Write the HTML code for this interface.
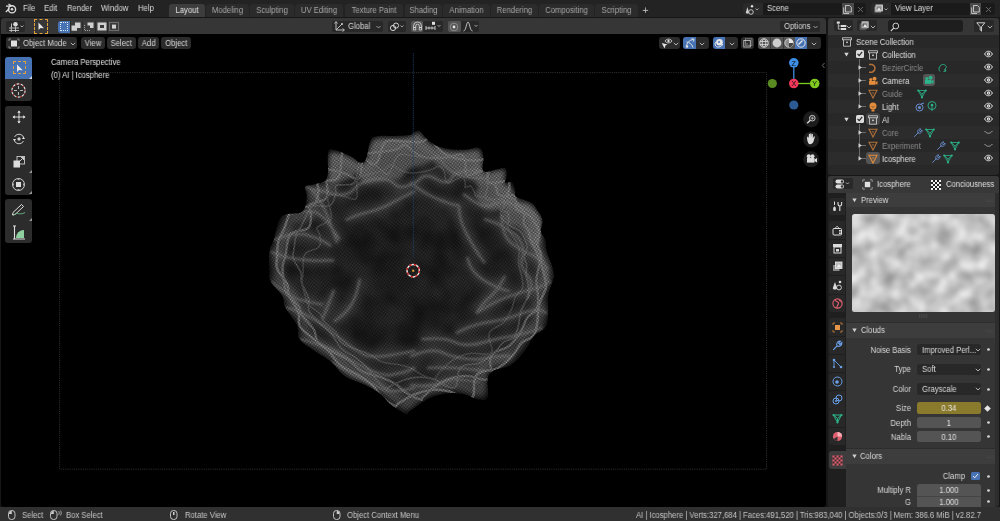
<!DOCTYPE html>
<html><head><meta charset="utf-8">
<style>
*{margin:0;padding:0;box-sizing:border-box}
html,body{width:1000px;height:521px;overflow:hidden;background:#161616;font-family:"Liberation Sans",sans-serif;}
.a{position:absolute}
.t{position:absolute;white-space:nowrap;font-size:8.3px;line-height:10px;color:#dcdcdc;transform:translateY(0.9px) scaleX(0.925);transform-origin:0 0;will-change:transform}
.tc{transform-origin:50% 0}
.tr{transform-origin:100% 0}
.btn{position:absolute;background:#282828;border-radius:2px}
svg{position:absolute;overflow:visible}
</style></head><body>
<!-- menu bar -->
<div class="a" style="left:0;top:0;width:1000px;height:17px;background:#232323"></div>

<!-- blender logo -->
<svg style="left:5px;top:3px" width="12" height="11" viewBox="0 0 12 11">
<circle cx="7" cy="6.3" r="3.6" fill="none" stroke="#dcdcdc" stroke-width="1.4"/>
<circle cx="7" cy="6.3" r="1.3" fill="#dcdcdc"/>
<path d="M1 3.2 L6 3.2 M0.8 9 L4.5 5.5 M3.5 1.2 L7 3" stroke="#dcdcdc" stroke-width="1.3" fill="none"/>
</svg>
<div class="t" style="left:23px;top:2.3px">File</div>
<div class="t" style="left:43.5px;top:2.3px">Edit</div>
<div class="t" style="left:66.5px;top:2.3px">Render</div>
<div class="t" style="left:101px;top:2.3px">Window</div>
<div class="t" style="left:138px;top:2.3px">Help</div>
<div class="a" style="left:169px;top:4px;width:36px;height:13px;background:#3d3d3d;border-radius:3px 3px 0 0"></div><div class="t tc" style="left:169px;top:3.8px;width:36px;text-align:center;color:#e8e8e8">Layout</div>
<div class="a" style="left:206px;top:4px;width:43px;height:13px;background:#2b2b2b;border-radius:3px 3px 0 0"></div><div class="t tc" style="left:206px;top:3.8px;width:43px;text-align:center;color:#a8a8a8">Modeling</div>
<div class="a" style="left:250px;top:4px;width:44px;height:13px;background:#2b2b2b;border-radius:3px 3px 0 0"></div><div class="t tc" style="left:250px;top:3.8px;width:44px;text-align:center;color:#a8a8a8">Sculpting</div>
<div class="a" style="left:295px;top:4px;width:48px;height:13px;background:#2b2b2b;border-radius:3px 3px 0 0"></div><div class="t tc" style="left:295px;top:3.8px;width:48px;text-align:center;color:#a8a8a8">UV Editing</div>
<div class="a" style="left:345px;top:4px;width:58px;height:13px;background:#2b2b2b;border-radius:3px 3px 0 0"></div><div class="t tc" style="left:345px;top:3.8px;width:58px;text-align:center;color:#a8a8a8">Texture Paint</div>
<div class="a" style="left:405px;top:4px;width:37px;height:13px;background:#2b2b2b;border-radius:3px 3px 0 0"></div><div class="t tc" style="left:405px;top:3.8px;width:37px;text-align:center;color:#a8a8a8">Shading</div>
<div class="a" style="left:443px;top:4px;width:47px;height:13px;background:#2b2b2b;border-radius:3px 3px 0 0"></div><div class="t tc" style="left:443px;top:3.8px;width:47px;text-align:center;color:#a8a8a8">Animation</div>
<div class="a" style="left:491px;top:4px;width:47px;height:13px;background:#2b2b2b;border-radius:3px 3px 0 0"></div><div class="t tc" style="left:491px;top:3.8px;width:47px;text-align:center;color:#a8a8a8">Rendering</div>
<div class="a" style="left:539px;top:4px;width:55px;height:13px;background:#2b2b2b;border-radius:3px 3px 0 0"></div><div class="t tc" style="left:539px;top:3.8px;width:55px;text-align:center;color:#a8a8a8">Compositing</div>
<div class="a" style="left:595px;top:4px;width:43px;height:13px;background:#2b2b2b;border-radius:3px 3px 0 0"></div><div class="t tc" style="left:595px;top:3.8px;width:43px;text-align:center;color:#a8a8a8">Scripting</div>
<div class="t tc" style="left:640px;top:4px;width:11px;text-align:center;font-size:11px;color:#bbb">+</div>
<!-- tool header -->
<div class="a" style="left:1px;top:18px;width:825px;height:16.5px;background:#363636;border-radius:3px 3px 0 0"></div>
<!-- viewport -->
<div class="a" style="left:1px;top:34px;width:825px;height:473px;background:#000;border-radius:0 0 3px 3px"></div>

<!-- TOOL HEADER CONTENT -->
<div class="btn" style="left:6px;top:21px;width:19px;height:11px;background:#282828"></div>
<svg style="left:8px;top:21px" width="16" height="11" viewBox="0 0 16 11">
<circle cx="7.5" cy="3.3" r="2.3" fill="#d8d8d8"/>
<path d="M1 7 H11 M1.2 9.5 H11 M3.3 5.5 V11 M7.5 5.5 V11 M3.5 2.5 V6" stroke="#c8c8c8" stroke-width="0.9" fill="none"/>
<path d="M12.5 4.5 L14 6 L15.5 4.5" stroke="#c8c8c8" stroke-width="0.8" fill="none"/>
</svg>
<div class="a" style="left:33.5px;top:19px;width:14.5px;height:14.5px;border:1.3px dashed #e5a23a;border-radius:1px"></div>
<svg style="left:37px;top:22px" width="8" height="9" viewBox="0 0 8 9"><path d="M1.5 0.5 L1.5 8 L3.5 6 L7 6.2 Z" fill="#e8e8e8"/></svg>
<div class="btn" style="left:57.6px;top:20.5px;width:62px;height:12px;background:#3a3a3a;border-radius:3px"></div>
<div class="a" style="left:57.6px;top:20.5px;width:12px;height:12px;background:#4772b3;border-radius:3px 0 0 3px"></div>
<div class="a" style="left:69.6px;top:20.5px;width:0.6px;height:12px;background:#2a2a2a"></div>
<div class="a" style="left:82.3px;top:20.5px;width:0.6px;height:12px;background:#2a2a2a"></div>
<div class="a" style="left:94.7px;top:20.5px;width:0.6px;height:12px;background:#2a2a2a"></div>
<div class="a" style="left:107px;top:20.5px;width:0.6px;height:12px;background:#2a2a2a"></div>
<div class="a" style="left:59.5px;top:22.3px;width:8.5px;height:8.5px;border:1px dotted #dfe8f5"></div>
<svg style="left:71px;top:22px" width="10" height="9" viewBox="0 0 10 9"><path d="M0.5 3.5 H4 V0.5 H9.5 V6 H6 V8.8 H0.5 Z" fill="#d0d0d0"/></svg>
<svg style="left:84px;top:22px" width="10" height="9" viewBox="0 0 10 9"><path d="M3.5 0.5 H9.5 V6 H6 V3.5 H3.5 Z" fill="#d0d0d0"/><path d="M0.5 3 V8.5 H6" stroke="#bbb" stroke-width="0.8" stroke-dasharray="1 1" fill="none"/></svg>
<svg style="left:96.5px;top:22px" width="10" height="9" viewBox="0 0 10 9"><path d="M0.5 0.5 H9.5 V8.5 H0.5 Z M3 3 V6 H7 V3 Z" fill="#d0d0d0" fill-rule="evenodd"/></svg>
<svg style="left:108.5px;top:22px" width="10" height="9" viewBox="0 0 10 9"><rect x="0.5" y="0.5" width="9" height="8" fill="none" stroke="#bbb" stroke-width="0.8" stroke-dasharray="1 1"/><rect x="3" y="2.6" width="4" height="4" fill="#d0d0d0"/></svg>

<!-- transform orientation -->
<div class="btn" style="left:331.5px;top:20.5px;width:51px;height:11.5px;background:#282828"></div>
<svg style="left:334px;top:21px" width="12" height="11" viewBox="0 0 12 11"><path d="M2 1 V9 H10 M2 9 L8 3" stroke="#cfcfcf" stroke-width="0.9" fill="none"/><path d="M0.5 2.5 L2 0.5 L3.5 2.5 M8.5 7.5 L10.5 9 L8.5 10.5" stroke="#cfcfcf" stroke-width="0.8" fill="none"/><circle cx="8" cy="3" r="1" fill="#cfcfcf"/></svg>
<div class="t" style="left:347.5px;top:20.2px">Global</div>
<svg style="left:376px;top:24.5px" width="5" height="4" viewBox="0 0 5 4"><path d="M0.5 1 L2.5 3 L4.5 1" stroke="#bbb" stroke-width="0.8" fill="none"/></svg>
<div class="btn" style="left:387.5px;top:20.5px;width:18px;height:11.5px;background:#282828"></div>
<svg style="left:389px;top:21.5px" width="16" height="10" viewBox="0 0 16 10"><circle cx="4" cy="6" r="2.6" fill="none" stroke="#d0d0d0" stroke-width="1"/><circle cx="7" cy="3.6" r="2.6" fill="none" stroke="#d0d0d0" stroke-width="1"/><path d="M11.5 3.5 L13 5 L14.5 3.5" stroke="#bbb" stroke-width="0.8" fill="none"/></svg>
<div class="btn" style="left:410.5px;top:20.5px;width:12.5px;height:11.5px;background:#555"></div>
<svg style="left:411.5px;top:21.3px" width="11" height="10" viewBox="0 0 11 10"><path d="M1.5 6.5 V5 A4 4 0 0 1 9.5 5 V6.5 H7.3 V5 A1.8 1.8 0 0 0 3.7 5 V6.5 Z" fill="none" stroke="#d8d8d8" stroke-width="0.8"/><path d="M1.5 6.5 H3.7 V9 H1.5 Z M7.3 6.5 H9.5 V9 H7.3 Z" fill="none" stroke="#d8d8d8" stroke-width="0.8"/></svg>
<div class="btn" style="left:423px;top:20.5px;width:20px;height:11.5px;background:#282828"></div>
<svg style="left:424.5px;top:21px" width="18" height="11" viewBox="0 0 18 11"><rect x="7" y="0.8" width="3" height="3" fill="#e0e0e0"/><path d="M1 7 H10 M1 5 V9 M4 5.5 V8.5 M7 5.5 V8.5 M10 5 V9" stroke="#cfcfcf" stroke-width="0.9" fill="none"/><path d="M12.5 4 L14 5.5 L15.5 4" stroke="#bbb" stroke-width="0.8" fill="none"/></svg>
<div class="btn" style="left:447.5px;top:20.5px;width:13px;height:11.5px;background:#555"></div>
<svg style="left:449px;top:21.5px" width="10" height="10" viewBox="0 0 10 10"><circle cx="5" cy="5" r="3.8" fill="none" stroke="#999" stroke-width="0.8"/><circle cx="5" cy="5" r="1.4" fill="#e8e8e8"/></svg>
<div class="btn" style="left:461px;top:20.5px;width:18px;height:11.5px;background:#282828"></div>
<svg style="left:462.5px;top:21px" width="16" height="11" viewBox="0 0 16 11"><path d="M0.5 10 C3 10 3.5 1 5 1 C6.5 1 7 10 9.5 10" stroke="#cfcfcf" stroke-width="0.9" fill="none"/><path d="M11.5 4 L13 5.5 L14.5 4" stroke="#bbb" stroke-width="0.8" fill="none"/></svg>

<!-- options -->
<div class="btn" style="left:779.5px;top:20.5px;width:40.5px;height:11.5px;background:#282828"></div>
<div class="t" style="left:783.5px;top:20.2px">Options</div>
<svg style="left:813px;top:24.5px" width="5" height="4" viewBox="0 0 5 4"><path d="M0.5 1 L2.5 3 L4.5 1" stroke="#bbb" stroke-width="0.8" fill="none"/></svg>

<!-- scene selector -->
<div class="btn" style="left:742.5px;top:3px;width:123.5px;height:12px;background:#1a1a1a;border-radius:3px"></div>
<div class="a" style="left:742.5px;top:3px;width:20px;height:12px;background:#2a2a2a;border-radius:3px 0 0 3px"></div>
<svg style="left:745px;top:3.5px" width="16" height="11" viewBox="0 0 16 11"><path d="M2.5 3 L0.8 8.5 C0.8 10 4 10 4 8.5 Z" fill="#cfcfcf"/><circle cx="6" cy="8" r="2.3" fill="none" stroke="#cfcfcf" stroke-width="0.9"/><circle cx="7" cy="2.2" r="1.2" fill="#e0e0e0"/><path d="M10.5 4.5 L12 6 L13.5 4.5" stroke="#bbb" stroke-width="0.8" fill="none"/></svg>
<div class="t" style="left:767px;top:2.2px;color:#e0e0e0">Scene</div>
<div class="a" style="left:841.5px;top:3px;width:12px;height:12px;background:#4a4a4a"></div>
<svg style="left:843px;top:4.5px" width="9" height="9" viewBox="0 0 9 9"><path d="M2.5 0.5 H6.5 L8.3 2.3 V7 H2.5 Z" fill="none" stroke="#ddd" stroke-width="0.8"/><path d="M0.7 2.5 V8.5 H6" fill="none" stroke="#ddd" stroke-width="0.8"/></svg>
<svg style="left:856.5px;top:5.5px" width="7" height="7" viewBox="0 0 7 7"><path d="M1 1 L6 6 M6 1 L1 6" stroke="#777" stroke-width="0.8"/></svg>

<div class="btn" style="left:871px;top:3px;width:124px;height:12px;background:#1a1a1a;border-radius:3px"></div>
<div class="a" style="left:871px;top:3px;width:20px;height:12px;background:#2a2a2a;border-radius:3px 0 0 3px"></div>
<svg style="left:872.5px;top:3.5px" width="16" height="11" viewBox="0 0 16 11"><rect x="3" y="1" width="6.5" height="6" fill="#aaa"/><rect x="1.5" y="2.5" width="6.5" height="6" fill="#888"/><rect x="3" y="1" width="6.5" height="6" fill="none" stroke="#ddd" stroke-width="0.8"/><path d="M4 6.5 L6 3.5 L8 6.5 Z" fill="#eee"/><path d="M11.5 4.5 L13 6 L14.5 4.5" stroke="#bbb" stroke-width="0.8" fill="none"/></svg>
<div class="t" style="left:895px;top:2.2px;color:#e0e0e0">View Layer</div>
<div class="a" style="left:969.5px;top:3px;width:11.5px;height:12px;background:#4a4a4a"></div>
<svg style="left:971px;top:4.5px" width="9" height="9" viewBox="0 0 9 9"><path d="M2.5 0.5 H6.5 L8.3 2.3 V7 H2.5 Z" fill="none" stroke="#ddd" stroke-width="0.8"/><path d="M0.7 2.5 V8.5 H6" fill="none" stroke="#ddd" stroke-width="0.8"/></svg>
<svg style="left:985px;top:5.5px" width="7" height="7" viewBox="0 0 7 7"><path d="M1 1 L6 6 M6 1 L1 6" stroke="#777" stroke-width="0.8"/></svg>


<!-- VIEWPORT HEADER -->
<div class="btn" style="left:5.8px;top:36.8px;width:71px;height:12.7px;background:#2b2b2b;border-radius:3px"></div>
<svg style="left:8px;top:37.5px" width="12" height="11" viewBox="0 0 12 11"><rect x="3" y="2.5" width="6" height="6" fill="#e0e0e0"/><path d="M1 3 V1 H3 M9 1 H11 V3 M11 8 V10 H9 M3 10 H1 V8" stroke="#999" stroke-width="0.8" fill="none"/></svg>
<div class="t" style="left:22.5px;top:37.4px">Object Mode</div>
<svg style="left:69.5px;top:41.5px" width="6" height="4" viewBox="0 0 6 4"><path d="M0.8 0.8 L3 3 L5.2 0.8" stroke="#c0c0c0" stroke-width="0.9" fill="none"/></svg>
<div class="btn" style="left:81px;top:36.8px;width:24px;height:12.7px;background:#2b2b2b;border-radius:3px"></div>
<div class="t tc" style="left:81px;width:24px;text-align:center;top:37.4px">View</div>
<div class="btn" style="left:107.3px;top:36.8px;width:28.5px;height:12.7px;background:#2b2b2b;border-radius:3px"></div>
<div class="t tc" style="left:107.3px;width:28.5px;text-align:center;top:37.4px">Select</div>
<div class="btn" style="left:137.5px;top:36.8px;width:21.3px;height:12.7px;background:#2b2b2b;border-radius:3px"></div>
<div class="t tc" style="left:137.5px;width:21.3px;text-align:center;top:37.4px">Add</div>
<div class="btn" style="left:160.8px;top:36.8px;width:30.5px;height:12.7px;background:#2b2b2b;border-radius:3px"></div>
<div class="t tc" style="left:160.8px;width:30.5px;text-align:center;top:37.4px">Object</div>

<div class="btn" style="left:659px;top:36.8px;width:20.7px;height:12.2px;background:#2b2b2b;border-radius:3px"></div>
<svg style="left:661px;top:37.5px" width="12" height="11" viewBox="0 0 12 11"><path d="M4 3 C5.5 0.5 9.5 0.5 11 3 C9.5 5.5 5.5 5.5 4 3 Z" fill="none" stroke="#ddd" stroke-width="0.9"/><circle cx="7.5" cy="3" r="1.2" fill="#ddd"/><path d="M0.8 5 L6.5 6.5 L4.5 7.5 L3.5 10.5 Z" fill="#e5e5e5"/></svg>
<svg style="left:672.5px;top:41.5px" width="6" height="4" viewBox="0 0 6 4"><path d="M0.8 0.8 L3 3 L5.2 0.8" stroke="#c0c0c0" stroke-width="0.9" fill="none"/></svg>
<div class="btn" style="left:683px;top:36.8px;width:25.5px;height:12.2px;background:#2b2b2b;border-radius:3px"></div>
<div class="a" style="left:683px;top:36.8px;width:12.5px;height:12.2px;background:#4772b3;border-radius:3px 0 0 3px"></div>
<svg style="left:684.5px;top:38px" width="10" height="10" viewBox="0 0 10 10"><path d="M1.5 9 C1.5 5 4 2 8.5 1.5" stroke="#e8e8e8" stroke-width="0.9" fill="none"/><path d="M1.5 4 C4 4 7 6 8 9.5" stroke="#e8e8e8" stroke-width="0.9" fill="none"/><path d="M6.5 0.8 L9 1.2 L8.5 3.6" stroke="#e8e8e8" stroke-width="0.9" fill="none"/><circle cx="2" cy="8.5" r="1.2" fill="#e8e8e8"/></svg>
<svg style="left:699px;top:41.5px" width="6" height="4" viewBox="0 0 6 4"><path d="M0.8 0.8 L3 3 L5.2 0.8" stroke="#c0c0c0" stroke-width="0.9" fill="none"/></svg>
<div class="btn" style="left:712.5px;top:36.8px;width:25.2px;height:12.2px;background:#2b2b2b;border-radius:3px"></div>
<div class="a" style="left:712.5px;top:36.8px;width:12.2px;height:12.2px;background:#4772b3;border-radius:3px 0 0 3px"></div>
<svg style="left:713.5px;top:37.8px" width="10" height="10" viewBox="0 0 10 10"><circle cx="5.5" cy="4.2" r="3.3" fill="#e8e8e8"/><path d="M2.5 3.5 C0 5 1 9.5 4.5 9 C7 8.8 8.5 7.5 8.5 6" stroke="#e8e8e8" stroke-width="1" fill="none"/><circle cx="5" cy="4" r="1" fill="#4772b3"/></svg>
<svg style="left:728.5px;top:41.5px" width="6" height="4" viewBox="0 0 6 4"><path d="M0.8 0.8 L3 3 L5.2 0.8" stroke="#c0c0c0" stroke-width="0.9" fill="none"/></svg>
<div class="btn" style="left:741.3px;top:36.8px;width:12.6px;height:12.2px;background:#2b2b2b;border-radius:3px"></div>
<svg style="left:743px;top:38px" width="10" height="10" viewBox="0 0 10 10"><rect x="2.5" y="0.8" width="6.5" height="6.5" fill="none" stroke="#888" stroke-width="0.8"/><rect x="0.8" y="2.5" width="6.5" height="6.5" fill="none" stroke="#ccc" stroke-width="0.8"/><circle cx="4" cy="5.8" r="0.6" fill="#ccc"/></svg>
<div class="btn" style="left:757.6px;top:36.8px;width:63px;height:12.2px;background:#2b2b2b;border-radius:3px"></div>
<div class="a" style="left:757.6px;top:36.8px;width:37.3px;height:12.2px;background:#545454;border-radius:3px 0 0 3px"></div>
<div class="a" style="left:770.2px;top:36.8px;width:0.6px;height:12.2px;background:#3a3a3a"></div>
<div class="a" style="left:782.8px;top:36.8px;width:0.6px;height:12.2px;background:#3a3a3a"></div>
<div class="a" style="left:794.9px;top:36.8px;width:12.6px;height:12.2px;background:#4772b3"></div>
<svg style="left:758.9px;top:37.9px" width="10" height="10" viewBox="0 0 10 10"><circle cx="5" cy="5" r="4.2" fill="none" stroke="#ddd" stroke-width="0.9"/><ellipse cx="5" cy="5" rx="1.8" ry="4.2" fill="none" stroke="#ddd" stroke-width="0.8"/><path d="M0.8 3.5 H9.2 M0.8 6.5 H9.2" stroke="#ddd" stroke-width="0.8"/></svg>
<svg style="left:771.5px;top:37.9px" width="10" height="10" viewBox="0 0 10 10"><circle cx="5" cy="5" r="4.4" fill="#cfcfcf"/></svg>
<svg style="left:783.9px;top:37.9px" width="10" height="10" viewBox="0 0 10 10"><circle cx="5" cy="5" r="4.2" fill="#8a8a8a" stroke="#ddd" stroke-width="0.8"/><path d="M5 5 V0.8 A4.2 4.2 0 0 1 9.2 5 Z" fill="#e8e8e8"/><path d="M5 5 H9.2 A4.2 4.2 0 0 1 5 9.2 Z" fill="#444"/></svg>
<svg style="left:796.2px;top:37.9px" width="10" height="10" viewBox="0 0 10 10"><circle cx="5" cy="5" r="4.2" fill="none" stroke="#eee" stroke-width="0.9"/><path d="M2.5 6.5 L6.5 2.5" stroke="#eee" stroke-width="1.2"/></svg>
<svg style="left:811px;top:41.5px" width="6" height="4" viewBox="0 0 6 4"><path d="M0.8 0.8 L3 3 L5.2 0.8" stroke="#c0c0c0" stroke-width="0.9" fill="none"/></svg>



<!-- VIEWPORT OVERLAYS -->
<!--MESH-->
<svg style="left:0;top:0" width="1000" height="521" viewBox="0 0 1000 521">
<rect x="59.6" y="72.6" width="707" height="396.6" fill="none" stroke="#3c3c3c" stroke-width="0.8" stroke-dasharray="1.1 1.1"/>
<defs>
<pattern id="mesh" width="1.9" height="1.9" patternUnits="userSpaceOnUse" patternTransform="rotate(25)">
<path d="M0 0 H1.9 M0 0 V1.9 M0 0 L1.9 1.9" stroke="#e8e8e8" stroke-width="0.55" fill="none"/>
</pattern>
<filter id="bl4" x="-20%" y="-20%" width="140%" height="140%"><feGaussianBlur stdDeviation="4"/></filter>
<filter id="bl15" x="-20%" y="-20%" width="140%" height="140%"><feGaussianBlur stdDeviation="1.1"/></filter>
<filter id="bl1" x="-20%" y="-20%" width="140%" height="140%"><feGaussianBlur stdDeviation="0.7"/></filter>
<filter id="turb" x="0" y="0" width="100%" height="100%" color-interpolation-filters="sRGB"><feTurbulence type="fractalNoise" baseFrequency="0.04" numOctaves="2" seed="3"/><feColorMatrix type="matrix" values="0 0 0 0 0  0 0 0 0 0  0 0 0 0 0  2 0 0 0 -0.6"/></filter>
<filter id="bl2" x="-20%" y="-20%" width="140%" height="140%"><feGaussianBlur stdDeviation="2"/></filter>
<clipPath id="blobclip"><path d="M269.3 251.7 C270.2 245.7 271.6 246.5 273.6 240.2 C275.6 233.9 276.8 225.2 279.4 220.0 C282.0 214.8 282.0 216.0 286.6 214.3 C291.2 212.6 298.4 214.9 302.4 211.4 C306.4 207.9 306.2 201.9 306.8 197.0 C307.4 192.1 303.6 189.5 305.3 186.9 C307.0 184.3 311.1 185.7 315.4 184.0 C319.7 182.3 324.3 184.6 326.9 178.3 C329.5 172.0 326.6 158.0 328.3 152.4 C330.0 146.8 330.9 149.4 335.5 150.3 C340.1 151.2 346.5 154.3 351.4 156.7 C356.3 159.1 357.1 161.8 360.0 162.4 C362.9 163.0 363.8 163.6 365.8 159.6 C367.8 155.6 368.1 146.9 370.1 142.3 C372.1 137.7 371.3 137.8 375.9 136.5 C380.5 135.2 386.5 136.2 393.1 135.9 C399.7 135.6 403.9 136.0 409.0 135.0 C414.1 134.0 414.9 129.9 418.6 130.8 C422.3 131.7 423.3 136.2 427.3 139.4 C431.3 142.6 433.6 144.6 438.8 146.6 C444.0 148.6 447.4 148.9 453.2 149.5 C459.0 150.1 462.4 149.8 467.6 149.5 C472.8 149.2 475.9 146.6 479.1 148.0 C482.3 149.4 482.5 152.1 483.4 156.7 C484.3 161.3 480.8 168.5 483.4 171.1 C486.0 173.7 492.1 170.2 496.4 169.6 C500.7 169.0 503.0 166.8 505.0 168.2 C507.0 169.6 506.5 173.9 506.5 176.8 C506.5 179.7 503.9 181.4 505.0 182.6 C506.1 183.8 510.2 180.9 512.2 182.6 C514.2 184.3 514.2 188.3 515.1 191.2 C516.0 194.1 513.3 194.7 516.5 197.0 C519.7 199.3 526.7 199.8 531.0 202.7 C535.3 205.6 535.8 207.9 538.1 211.4 C540.4 214.9 541.8 216.0 542.4 220.0 C543.0 224.0 540.4 227.5 541.0 231.5 C541.6 235.5 544.1 236.2 545.3 240.2 C546.5 244.2 545.6 247.1 546.8 251.7 C548.0 256.3 549.7 258.5 551.1 263.2 C552.5 267.9 553.7 271.3 554.0 275.0 C554.3 278.7 553.7 277.3 552.5 281.5 C551.3 285.7 549.1 289.6 548.2 295.9 C547.3 302.2 548.8 306.9 548.2 313.2 C547.6 319.5 548.2 323.0 545.3 327.6 C542.4 332.2 537.8 331.6 533.8 336.2 C529.8 340.8 529.8 344.8 525.2 350.6 C520.6 356.4 517.1 361.0 510.8 365.0 C504.5 369.0 498.1 367.9 493.5 370.8 C488.9 373.7 488.9 374.2 487.7 379.4 C486.5 384.6 489.4 392.7 487.7 396.7 C486.0 400.7 484.3 400.2 479.1 399.6 C473.9 399.0 468.7 395.0 461.8 393.8 C454.9 392.6 451.5 392.6 444.6 393.8 C437.7 395.0 434.2 396.1 427.3 399.6 C420.4 403.1 414.2 408.2 410.0 411.1 C405.8 414.0 409.8 415.2 406.1 414.0 C402.4 412.8 396.9 409.3 391.7 405.3 C386.5 401.3 385.4 397.8 380.2 393.8 C375.0 389.8 372.7 388.7 365.8 385.2 C358.9 381.7 352.5 381.1 345.6 376.5 C338.7 371.9 337.5 367.3 331.2 362.1 C324.9 356.9 320.3 355.2 314.0 350.6 C307.7 346.0 303.1 344.3 299.6 339.1 C296.1 333.9 299.6 331.0 296.7 324.7 C293.8 318.4 288.1 313.2 285.2 307.4 C282.3 301.6 285.2 301.1 282.3 295.9 C279.4 290.7 273.4 286.7 270.8 281.5 C268.2 276.3 269.6 276.0 269.3 270.0 C269.0 264.0 268.4 257.7 269.3 251.7 Z"/></clipPath>
<mask id="meshmask" maskUnits="userSpaceOnUse" x="0" y="0" width="1000" height="521">
<g clip-path="url(#blobclip)">
<rect x="0" y="0" width="1000" height="521" fill="#4e4e4e"/>
<rect x="260" y="125" width="300" height="295" fill="#000" filter="url(#turb)" opacity="0.45"/>
<g fill="#b0b0b0" filter="url(#bl2)"><path d="M370.1 142.3 C372.8 137.7 372.1 137.6 375.9 136.5 C379.7 135.4 387.6 136.2 393.1 135.9 C398.6 135.7 404.8 135.8 409.0 135.0 C413.2 134.2 415.6 130.1 418.6 130.8 C421.7 131.5 423.9 136.8 427.3 139.4 C430.7 142.0 437.9 143.2 438.8 146.6 C439.8 150.0 435.9 156.5 433.0 159.6 C430.1 162.7 425.3 163.9 421.5 165.3 C417.7 166.7 413.6 166.1 410.0 168.2 C406.4 170.3 404.0 176.1 400.0 178.0 C396.0 179.9 392.1 178.9 385.9 179.7 C379.7 180.5 367.2 185.2 362.9 182.6 C358.6 180.0 358.8 170.6 360.0 163.9 C361.2 157.2 367.5 146.9 370.1 142.3 Z"/><path d="M328.3 152.4 C332.4 148.8 346.1 154.8 351.4 156.7 C356.7 158.6 359.5 160.8 360.0 163.9 C360.5 167.0 358.1 172.3 354.3 175.4 C350.5 178.5 341.6 182.1 337.0 182.6 C332.4 183.1 328.3 183.3 326.9 178.3 C325.4 173.3 324.2 156.0 328.3 152.4 Z"/><path d="M438.8 146.6 C442.2 144.9 446.5 149.3 453.2 149.5 C459.9 149.7 474.1 146.8 479.1 148.0 C484.1 149.2 482.7 152.8 483.4 156.7 C484.1 160.5 484.6 167.3 483.4 171.1 C482.2 174.9 480.3 178.8 476.2 179.7 C472.1 180.6 464.3 178.2 459.0 176.8 C453.7 175.4 448.9 174.0 444.6 171.1 C440.3 168.2 434.0 163.7 433.0 159.6 C432.0 155.5 435.4 148.3 438.8 146.6 Z"/><path d="M483.4 171.1 C488.2 168.7 501.1 167.2 505.0 168.2 C508.9 169.1 507.4 173.5 506.5 176.8 C505.6 180.2 502.9 185.9 499.3 188.3 C495.7 190.7 488.8 192.1 484.9 191.2 C481.0 190.2 476.4 185.9 476.2 182.6 C475.9 179.2 478.6 173.5 483.4 171.1 Z"/><path d="M476.2 191.2 C478.1 186.9 489.9 182.6 496.4 182.6 C502.9 182.6 511.8 188.3 515.1 191.2 C518.5 194.1 518.2 197.0 516.5 199.9 C514.8 202.8 510.3 207.1 505.0 208.5 C499.7 209.9 489.7 211.4 484.9 208.5 C480.1 205.6 474.3 195.5 476.2 191.2 Z"/><path d="M505.0 208.5 C509.3 205.1 524.8 200.8 531.0 202.7 C537.2 204.6 540.7 213.8 542.4 220.0 C544.1 226.2 542.9 235.9 541.0 240.2 C539.1 244.5 534.6 247.9 531.0 246.0 C527.4 244.1 523.7 232.5 519.4 228.7 C515.1 224.8 507.4 226.3 505.0 222.9 C502.6 219.5 500.7 211.9 505.0 208.5 Z"/></g>
<path d="M269.3 251.7 C270.2 245.7 271.6 246.5 273.6 240.2 C275.6 233.9 276.8 225.2 279.4 220.0 C282.0 214.8 282.0 216.0 286.6 214.3 C291.2 212.6 298.4 214.9 302.4 211.4 C306.4 207.9 306.2 201.9 306.8 197.0 C307.4 192.1 303.6 189.5 305.3 186.9 C307.0 184.3 311.1 185.7 315.4 184.0 C319.7 182.3 324.3 184.6 326.9 178.3 C329.5 172.0 326.6 158.0 328.3 152.4 C330.0 146.8 330.9 149.4 335.5 150.3 C340.1 151.2 346.5 154.3 351.4 156.7 C356.3 159.1 357.1 161.8 360.0 162.4 C362.9 163.0 363.8 163.6 365.8 159.6 C367.8 155.6 368.1 146.9 370.1 142.3 C372.1 137.7 371.3 137.8 375.9 136.5 C380.5 135.2 386.5 136.2 393.1 135.9 C399.7 135.6 403.9 136.0 409.0 135.0 C414.1 134.0 414.9 129.9 418.6 130.8 C422.3 131.7 423.3 136.2 427.3 139.4 C431.3 142.6 433.6 144.6 438.8 146.6 C444.0 148.6 447.4 148.9 453.2 149.5 C459.0 150.1 462.4 149.8 467.6 149.5 C472.8 149.2 475.9 146.6 479.1 148.0 C482.3 149.4 482.5 152.1 483.4 156.7 C484.3 161.3 480.8 168.5 483.4 171.1 C486.0 173.7 492.1 170.2 496.4 169.6 C500.7 169.0 503.0 166.8 505.0 168.2 C507.0 169.6 506.5 173.9 506.5 176.8 C506.5 179.7 503.9 181.4 505.0 182.6 C506.1 183.8 510.2 180.9 512.2 182.6 C514.2 184.3 514.2 188.3 515.1 191.2 C516.0 194.1 513.3 194.7 516.5 197.0 C519.7 199.3 526.7 199.8 531.0 202.7 C535.3 205.6 535.8 207.9 538.1 211.4 C540.4 214.9 541.8 216.0 542.4 220.0 C543.0 224.0 540.4 227.5 541.0 231.5 C541.6 235.5 544.1 236.2 545.3 240.2 C546.5 244.2 545.6 247.1 546.8 251.7 C548.0 256.3 549.7 258.5 551.1 263.2 C552.5 267.9 553.7 271.3 554.0 275.0 C554.3 278.7 553.7 277.3 552.5 281.5 C551.3 285.7 549.1 289.6 548.2 295.9 C547.3 302.2 548.8 306.9 548.2 313.2 C547.6 319.5 548.2 323.0 545.3 327.6 C542.4 332.2 537.8 331.6 533.8 336.2 C529.8 340.8 529.8 344.8 525.2 350.6 C520.6 356.4 517.1 361.0 510.8 365.0 C504.5 369.0 498.1 367.9 493.5 370.8 C488.9 373.7 488.9 374.2 487.7 379.4 C486.5 384.6 489.4 392.7 487.7 396.7 C486.0 400.7 484.3 400.2 479.1 399.6 C473.9 399.0 468.7 395.0 461.8 393.8 C454.9 392.6 451.5 392.6 444.6 393.8 C437.7 395.0 434.2 396.1 427.3 399.6 C420.4 403.1 414.2 408.2 410.0 411.1 C405.8 414.0 409.8 415.2 406.1 414.0 C402.4 412.8 396.9 409.3 391.7 405.3 C386.5 401.3 385.4 397.8 380.2 393.8 C375.0 389.8 372.7 388.7 365.8 385.2 C358.9 381.7 352.5 381.1 345.6 376.5 C338.7 371.9 337.5 367.3 331.2 362.1 C324.9 356.9 320.3 355.2 314.0 350.6 C307.7 346.0 303.1 344.3 299.6 339.1 C296.1 333.9 299.6 331.0 296.7 324.7 C293.8 318.4 288.1 313.2 285.2 307.4 C282.3 301.6 285.2 301.1 282.3 295.9 C279.4 290.7 273.4 286.7 270.8 281.5 C268.2 276.3 269.6 276.0 269.3 270.0 C269.0 264.0 268.4 257.7 269.3 251.7 Z" fill="none" stroke="#000000" stroke-width="3" filter="url(#bl2)"/><path d="M269.3 251.7 C270.2 245.7 271.6 246.5 273.6 240.2 C275.6 233.9 276.8 225.2 279.4 220.0 C282.0 214.8 282.0 216.0 286.6 214.3 C291.2 212.6 298.4 214.9 302.4 211.4 C306.4 207.9 306.2 201.9 306.8 197.0 C307.4 192.1 303.6 189.5 305.3 186.9 C307.0 184.3 311.1 185.7 315.4 184.0 C319.7 182.3 324.3 184.6 326.9 178.3 C329.5 172.0 326.6 158.0 328.3 152.4 C330.0 146.8 330.9 149.4 335.5 150.3 C340.1 151.2 346.5 154.3 351.4 156.7 C356.3 159.1 357.1 161.8 360.0 162.4 C362.9 163.0 363.8 163.6 365.8 159.6 C367.8 155.6 368.1 146.9 370.1 142.3 C372.1 137.7 371.3 137.8 375.9 136.5 C380.5 135.2 386.5 136.2 393.1 135.9 C399.7 135.6 403.9 136.0 409.0 135.0 C414.1 134.0 414.9 129.9 418.6 130.8 C422.3 131.7 423.3 136.2 427.3 139.4 C431.3 142.6 433.6 144.6 438.8 146.6 C444.0 148.6 447.4 148.9 453.2 149.5 C459.0 150.1 462.4 149.8 467.6 149.5 C472.8 149.2 475.9 146.6 479.1 148.0 C482.3 149.4 482.5 152.1 483.4 156.7 C484.3 161.3 480.8 168.5 483.4 171.1 C486.0 173.7 492.1 170.2 496.4 169.6 C500.7 169.0 503.0 166.8 505.0 168.2 C507.0 169.6 506.5 173.9 506.5 176.8 C506.5 179.7 503.9 181.4 505.0 182.6 C506.1 183.8 510.2 180.9 512.2 182.6 C514.2 184.3 514.2 188.3 515.1 191.2 C516.0 194.1 513.3 194.7 516.5 197.0 C519.7 199.3 526.7 199.8 531.0 202.7 C535.3 205.6 535.8 207.9 538.1 211.4 C540.4 214.9 541.8 216.0 542.4 220.0 C543.0 224.0 540.4 227.5 541.0 231.5 C541.6 235.5 544.1 236.2 545.3 240.2 C546.5 244.2 545.6 247.1 546.8 251.7 C548.0 256.3 549.7 258.5 551.1 263.2 C552.5 267.9 553.7 271.3 554.0 275.0 C554.3 278.7 553.7 277.3 552.5 281.5 C551.3 285.7 549.1 289.6 548.2 295.9 C547.3 302.2 548.8 306.9 548.2 313.2 C547.6 319.5 548.2 323.0 545.3 327.6 C542.4 332.2 537.8 331.6 533.8 336.2 C529.8 340.8 529.8 344.8 525.2 350.6 C520.6 356.4 517.1 361.0 510.8 365.0 C504.5 369.0 498.1 367.9 493.5 370.8 C488.9 373.7 488.9 374.2 487.7 379.4 C486.5 384.6 489.4 392.7 487.7 396.7 C486.0 400.7 484.3 400.2 479.1 399.6 C473.9 399.0 468.7 395.0 461.8 393.8 C454.9 392.6 451.5 392.6 444.6 393.8 C437.7 395.0 434.2 396.1 427.3 399.6 C420.4 403.1 414.2 408.2 410.0 411.1 C405.8 414.0 409.8 415.2 406.1 414.0 C402.4 412.8 396.9 409.3 391.7 405.3 C386.5 401.3 385.4 397.8 380.2 393.8 C375.0 389.8 372.7 388.7 365.8 385.2 C358.9 381.7 352.5 381.1 345.6 376.5 C338.7 371.9 337.5 367.3 331.2 362.1 C324.9 356.9 320.3 355.2 314.0 350.6 C307.7 346.0 303.1 344.3 299.6 339.1 C296.1 333.9 299.6 331.0 296.7 324.7 C293.8 318.4 288.1 313.2 285.2 307.4 C282.3 301.6 285.2 301.1 282.3 295.9 C279.4 290.7 273.4 286.7 270.8 281.5 C268.2 276.3 269.6 276.0 269.3 270.0 C269.0 264.0 268.4 257.7 269.3 251.7 Z" transform="translate(412 270) scale(0.93) translate(-412 -270)" fill="none" stroke="#6a6a6a" stroke-width="10" filter="url(#bl4)" style="mix-blend-mode:screen"/>
<g fill="none" filter="url(#bl1)" style="mix-blend-mode:screen">
<path d="M269.3 251.7 C270.2 245.7 271.6 246.5 273.6 240.2 C275.6 233.9 276.8 225.2 279.4 220.0 C282.0 214.8 282.0 216.0 286.6 214.3 C291.2 212.6 298.4 214.9 302.4 211.4 C306.4 207.9 306.2 201.9 306.8 197.0 C307.4 192.1 303.6 189.5 305.3 186.9 C307.0 184.3 311.1 185.7 315.4 184.0 C319.7 182.3 324.3 184.6 326.9 178.3 C329.5 172.0 326.6 158.0 328.3 152.4 C330.0 146.8 330.9 149.4 335.5 150.3 C340.1 151.2 346.5 154.3 351.4 156.7 C356.3 159.1 357.1 161.8 360.0 162.4 C362.9 163.0 363.8 163.6 365.8 159.6 C367.8 155.6 368.1 146.9 370.1 142.3 C372.1 137.7 371.3 137.8 375.9 136.5 C380.5 135.2 386.5 136.2 393.1 135.9 C399.7 135.6 403.9 136.0 409.0 135.0 C414.1 134.0 414.9 129.9 418.6 130.8 C422.3 131.7 423.3 136.2 427.3 139.4 C431.3 142.6 433.6 144.6 438.8 146.6 C444.0 148.6 447.4 148.9 453.2 149.5 C459.0 150.1 462.4 149.8 467.6 149.5 C472.8 149.2 475.9 146.6 479.1 148.0 C482.3 149.4 482.5 152.1 483.4 156.7 C484.3 161.3 480.8 168.5 483.4 171.1 C486.0 173.7 492.1 170.2 496.4 169.6 C500.7 169.0 503.0 166.8 505.0 168.2 C507.0 169.6 506.5 173.9 506.5 176.8 C506.5 179.7 503.9 181.4 505.0 182.6 C506.1 183.8 510.2 180.9 512.2 182.6 C514.2 184.3 514.2 188.3 515.1 191.2 C516.0 194.1 513.3 194.7 516.5 197.0 C519.7 199.3 526.7 199.8 531.0 202.7 C535.3 205.6 535.8 207.9 538.1 211.4 C540.4 214.9 541.8 216.0 542.4 220.0 C543.0 224.0 540.4 227.5 541.0 231.5 C541.6 235.5 544.1 236.2 545.3 240.2 C546.5 244.2 545.6 247.1 546.8 251.7 C548.0 256.3 549.7 258.5 551.1 263.2 C552.5 267.9 553.7 271.3 554.0 275.0 C554.3 278.7 553.7 277.3 552.5 281.5 C551.3 285.7 549.1 289.6 548.2 295.9 C547.3 302.2 548.8 306.9 548.2 313.2 C547.6 319.5 548.2 323.0 545.3 327.6 C542.4 332.2 537.8 331.6 533.8 336.2 C529.8 340.8 529.8 344.8 525.2 350.6 C520.6 356.4 517.1 361.0 510.8 365.0 C504.5 369.0 498.1 367.9 493.5 370.8 C488.9 373.7 488.9 374.2 487.7 379.4 C486.5 384.6 489.4 392.7 487.7 396.7 C486.0 400.7 484.3 400.2 479.1 399.6 C473.9 399.0 468.7 395.0 461.8 393.8 C454.9 392.6 451.5 392.6 444.6 393.8 C437.7 395.0 434.2 396.1 427.3 399.6 C420.4 403.1 414.2 408.2 410.0 411.1 C405.8 414.0 409.8 415.2 406.1 414.0 C402.4 412.8 396.9 409.3 391.7 405.3 C386.5 401.3 385.4 397.8 380.2 393.8 C375.0 389.8 372.7 388.7 365.8 385.2 C358.9 381.7 352.5 381.1 345.6 376.5 C338.7 371.9 337.5 367.3 331.2 362.1 C324.9 356.9 320.3 355.2 314.0 350.6 C307.7 346.0 303.1 344.3 299.6 339.1 C296.1 333.9 299.6 331.0 296.7 324.7 C293.8 318.4 288.1 313.2 285.2 307.4 C282.3 301.6 285.2 301.1 282.3 295.9 C279.4 290.7 273.4 286.7 270.8 281.5 C268.2 276.3 269.6 276.0 269.3 270.0 C269.0 264.0 268.4 257.7 269.3 251.7 Z" transform="translate(412 270) rotate(5) scale(0.95) translate(-412 -270)" stroke="#c0c0c0" stroke-width="2.6"/>
<path d="M269.3 251.7 C270.2 245.7 271.6 246.5 273.6 240.2 C275.6 233.9 276.8 225.2 279.4 220.0 C282.0 214.8 282.0 216.0 286.6 214.3 C291.2 212.6 298.4 214.9 302.4 211.4 C306.4 207.9 306.2 201.9 306.8 197.0 C307.4 192.1 303.6 189.5 305.3 186.9 C307.0 184.3 311.1 185.7 315.4 184.0 C319.7 182.3 324.3 184.6 326.9 178.3 C329.5 172.0 326.6 158.0 328.3 152.4 C330.0 146.8 330.9 149.4 335.5 150.3 C340.1 151.2 346.5 154.3 351.4 156.7 C356.3 159.1 357.1 161.8 360.0 162.4 C362.9 163.0 363.8 163.6 365.8 159.6 C367.8 155.6 368.1 146.9 370.1 142.3 C372.1 137.7 371.3 137.8 375.9 136.5 C380.5 135.2 386.5 136.2 393.1 135.9 C399.7 135.6 403.9 136.0 409.0 135.0 C414.1 134.0 414.9 129.9 418.6 130.8 C422.3 131.7 423.3 136.2 427.3 139.4 C431.3 142.6 433.6 144.6 438.8 146.6 C444.0 148.6 447.4 148.9 453.2 149.5 C459.0 150.1 462.4 149.8 467.6 149.5 C472.8 149.2 475.9 146.6 479.1 148.0 C482.3 149.4 482.5 152.1 483.4 156.7 C484.3 161.3 480.8 168.5 483.4 171.1 C486.0 173.7 492.1 170.2 496.4 169.6 C500.7 169.0 503.0 166.8 505.0 168.2 C507.0 169.6 506.5 173.9 506.5 176.8 C506.5 179.7 503.9 181.4 505.0 182.6 C506.1 183.8 510.2 180.9 512.2 182.6 C514.2 184.3 514.2 188.3 515.1 191.2 C516.0 194.1 513.3 194.7 516.5 197.0 C519.7 199.3 526.7 199.8 531.0 202.7 C535.3 205.6 535.8 207.9 538.1 211.4 C540.4 214.9 541.8 216.0 542.4 220.0 C543.0 224.0 540.4 227.5 541.0 231.5 C541.6 235.5 544.1 236.2 545.3 240.2 C546.5 244.2 545.6 247.1 546.8 251.7 C548.0 256.3 549.7 258.5 551.1 263.2 C552.5 267.9 553.7 271.3 554.0 275.0 C554.3 278.7 553.7 277.3 552.5 281.5 C551.3 285.7 549.1 289.6 548.2 295.9 C547.3 302.2 548.8 306.9 548.2 313.2 C547.6 319.5 548.2 323.0 545.3 327.6 C542.4 332.2 537.8 331.6 533.8 336.2 C529.8 340.8 529.8 344.8 525.2 350.6 C520.6 356.4 517.1 361.0 510.8 365.0 C504.5 369.0 498.1 367.9 493.5 370.8 C488.9 373.7 488.9 374.2 487.7 379.4 C486.5 384.6 489.4 392.7 487.7 396.7 C486.0 400.7 484.3 400.2 479.1 399.6 C473.9 399.0 468.7 395.0 461.8 393.8 C454.9 392.6 451.5 392.6 444.6 393.8 C437.7 395.0 434.2 396.1 427.3 399.6 C420.4 403.1 414.2 408.2 410.0 411.1 C405.8 414.0 409.8 415.2 406.1 414.0 C402.4 412.8 396.9 409.3 391.7 405.3 C386.5 401.3 385.4 397.8 380.2 393.8 C375.0 389.8 372.7 388.7 365.8 385.2 C358.9 381.7 352.5 381.1 345.6 376.5 C338.7 371.9 337.5 367.3 331.2 362.1 C324.9 356.9 320.3 355.2 314.0 350.6 C307.7 346.0 303.1 344.3 299.6 339.1 C296.1 333.9 299.6 331.0 296.7 324.7 C293.8 318.4 288.1 313.2 285.2 307.4 C282.3 301.6 285.2 301.1 282.3 295.9 C279.4 290.7 273.4 286.7 270.8 281.5 C268.2 276.3 269.6 276.0 269.3 270.0 C269.0 264.0 268.4 257.7 269.3 251.7 Z" transform="translate(412 270) rotate(-6) scale(0.9) translate(-412 -270)" stroke="#a8a8a8" stroke-width="2.6"/>
<path d="M269.3 251.7 C270.2 245.7 271.6 246.5 273.6 240.2 C275.6 233.9 276.8 225.2 279.4 220.0 C282.0 214.8 282.0 216.0 286.6 214.3 C291.2 212.6 298.4 214.9 302.4 211.4 C306.4 207.9 306.2 201.9 306.8 197.0 C307.4 192.1 303.6 189.5 305.3 186.9 C307.0 184.3 311.1 185.7 315.4 184.0 C319.7 182.3 324.3 184.6 326.9 178.3 C329.5 172.0 326.6 158.0 328.3 152.4 C330.0 146.8 330.9 149.4 335.5 150.3 C340.1 151.2 346.5 154.3 351.4 156.7 C356.3 159.1 357.1 161.8 360.0 162.4 C362.9 163.0 363.8 163.6 365.8 159.6 C367.8 155.6 368.1 146.9 370.1 142.3 C372.1 137.7 371.3 137.8 375.9 136.5 C380.5 135.2 386.5 136.2 393.1 135.9 C399.7 135.6 403.9 136.0 409.0 135.0 C414.1 134.0 414.9 129.9 418.6 130.8 C422.3 131.7 423.3 136.2 427.3 139.4 C431.3 142.6 433.6 144.6 438.8 146.6 C444.0 148.6 447.4 148.9 453.2 149.5 C459.0 150.1 462.4 149.8 467.6 149.5 C472.8 149.2 475.9 146.6 479.1 148.0 C482.3 149.4 482.5 152.1 483.4 156.7 C484.3 161.3 480.8 168.5 483.4 171.1 C486.0 173.7 492.1 170.2 496.4 169.6 C500.7 169.0 503.0 166.8 505.0 168.2 C507.0 169.6 506.5 173.9 506.5 176.8 C506.5 179.7 503.9 181.4 505.0 182.6 C506.1 183.8 510.2 180.9 512.2 182.6 C514.2 184.3 514.2 188.3 515.1 191.2 C516.0 194.1 513.3 194.7 516.5 197.0 C519.7 199.3 526.7 199.8 531.0 202.7 C535.3 205.6 535.8 207.9 538.1 211.4 C540.4 214.9 541.8 216.0 542.4 220.0 C543.0 224.0 540.4 227.5 541.0 231.5 C541.6 235.5 544.1 236.2 545.3 240.2 C546.5 244.2 545.6 247.1 546.8 251.7 C548.0 256.3 549.7 258.5 551.1 263.2 C552.5 267.9 553.7 271.3 554.0 275.0 C554.3 278.7 553.7 277.3 552.5 281.5 C551.3 285.7 549.1 289.6 548.2 295.9 C547.3 302.2 548.8 306.9 548.2 313.2 C547.6 319.5 548.2 323.0 545.3 327.6 C542.4 332.2 537.8 331.6 533.8 336.2 C529.8 340.8 529.8 344.8 525.2 350.6 C520.6 356.4 517.1 361.0 510.8 365.0 C504.5 369.0 498.1 367.9 493.5 370.8 C488.9 373.7 488.9 374.2 487.7 379.4 C486.5 384.6 489.4 392.7 487.7 396.7 C486.0 400.7 484.3 400.2 479.1 399.6 C473.9 399.0 468.7 395.0 461.8 393.8 C454.9 392.6 451.5 392.6 444.6 393.8 C437.7 395.0 434.2 396.1 427.3 399.6 C420.4 403.1 414.2 408.2 410.0 411.1 C405.8 414.0 409.8 415.2 406.1 414.0 C402.4 412.8 396.9 409.3 391.7 405.3 C386.5 401.3 385.4 397.8 380.2 393.8 C375.0 389.8 372.7 388.7 365.8 385.2 C358.9 381.7 352.5 381.1 345.6 376.5 C338.7 371.9 337.5 367.3 331.2 362.1 C324.9 356.9 320.3 355.2 314.0 350.6 C307.7 346.0 303.1 344.3 299.6 339.1 C296.1 333.9 299.6 331.0 296.7 324.7 C293.8 318.4 288.1 313.2 285.2 307.4 C282.3 301.6 285.2 301.1 282.3 295.9 C279.4 290.7 273.4 286.7 270.8 281.5 C268.2 276.3 269.6 276.0 269.3 270.0 C269.0 264.0 268.4 257.7 269.3 251.7 Z" transform="translate(412 270) rotate(10) scale(0.84) translate(-412 -270)" stroke="#787878" stroke-width="2"/>
<path d="M269.3 251.7 C270.2 245.7 271.6 246.5 273.6 240.2 C275.6 233.9 276.8 225.2 279.4 220.0 C282.0 214.8 282.0 216.0 286.6 214.3 C291.2 212.6 298.4 214.9 302.4 211.4 C306.4 207.9 306.2 201.9 306.8 197.0 C307.4 192.1 303.6 189.5 305.3 186.9 C307.0 184.3 311.1 185.7 315.4 184.0 C319.7 182.3 324.3 184.6 326.9 178.3 C329.5 172.0 326.6 158.0 328.3 152.4 C330.0 146.8 330.9 149.4 335.5 150.3 C340.1 151.2 346.5 154.3 351.4 156.7 C356.3 159.1 357.1 161.8 360.0 162.4 C362.9 163.0 363.8 163.6 365.8 159.6 C367.8 155.6 368.1 146.9 370.1 142.3 C372.1 137.7 371.3 137.8 375.9 136.5 C380.5 135.2 386.5 136.2 393.1 135.9 C399.7 135.6 403.9 136.0 409.0 135.0 C414.1 134.0 414.9 129.9 418.6 130.8 C422.3 131.7 423.3 136.2 427.3 139.4 C431.3 142.6 433.6 144.6 438.8 146.6 C444.0 148.6 447.4 148.9 453.2 149.5 C459.0 150.1 462.4 149.8 467.6 149.5 C472.8 149.2 475.9 146.6 479.1 148.0 C482.3 149.4 482.5 152.1 483.4 156.7 C484.3 161.3 480.8 168.5 483.4 171.1 C486.0 173.7 492.1 170.2 496.4 169.6 C500.7 169.0 503.0 166.8 505.0 168.2 C507.0 169.6 506.5 173.9 506.5 176.8 C506.5 179.7 503.9 181.4 505.0 182.6 C506.1 183.8 510.2 180.9 512.2 182.6 C514.2 184.3 514.2 188.3 515.1 191.2 C516.0 194.1 513.3 194.7 516.5 197.0 C519.7 199.3 526.7 199.8 531.0 202.7 C535.3 205.6 535.8 207.9 538.1 211.4 C540.4 214.9 541.8 216.0 542.4 220.0 C543.0 224.0 540.4 227.5 541.0 231.5 C541.6 235.5 544.1 236.2 545.3 240.2 C546.5 244.2 545.6 247.1 546.8 251.7 C548.0 256.3 549.7 258.5 551.1 263.2 C552.5 267.9 553.7 271.3 554.0 275.0 C554.3 278.7 553.7 277.3 552.5 281.5 C551.3 285.7 549.1 289.6 548.2 295.9 C547.3 302.2 548.8 306.9 548.2 313.2 C547.6 319.5 548.2 323.0 545.3 327.6 C542.4 332.2 537.8 331.6 533.8 336.2 C529.8 340.8 529.8 344.8 525.2 350.6 C520.6 356.4 517.1 361.0 510.8 365.0 C504.5 369.0 498.1 367.9 493.5 370.8 C488.9 373.7 488.9 374.2 487.7 379.4 C486.5 384.6 489.4 392.7 487.7 396.7 C486.0 400.7 484.3 400.2 479.1 399.6 C473.9 399.0 468.7 395.0 461.8 393.8 C454.9 392.6 451.5 392.6 444.6 393.8 C437.7 395.0 434.2 396.1 427.3 399.6 C420.4 403.1 414.2 408.2 410.0 411.1 C405.8 414.0 409.8 415.2 406.1 414.0 C402.4 412.8 396.9 409.3 391.7 405.3 C386.5 401.3 385.4 397.8 380.2 393.8 C375.0 389.8 372.7 388.7 365.8 385.2 C358.9 381.7 352.5 381.1 345.6 376.5 C338.7 371.9 337.5 367.3 331.2 362.1 C324.9 356.9 320.3 355.2 314.0 350.6 C307.7 346.0 303.1 344.3 299.6 339.1 C296.1 333.9 299.6 331.0 296.7 324.7 C293.8 318.4 288.1 313.2 285.2 307.4 C282.3 301.6 285.2 301.1 282.3 295.9 C279.4 290.7 273.4 286.7 270.8 281.5 C268.2 276.3 269.6 276.0 269.3 270.0 C269.0 264.0 268.4 257.7 269.3 251.7 Z" transform="translate(412 270) rotate(-14) scale(0.77) translate(-412 -270)" stroke="#606060" stroke-width="2"/>
</g>
<g fill="none" stroke="#606060" stroke-width="8" filter="url(#bl4)" style="mix-blend-mode:screen"><path d="M305.0 187.0 C309.7 188.1 311.8 189.3 322.6 191.2 C333.4 193.1 334.9 196.4 345.6 194.1 C356.3 191.8 352.2 186.4 362.9 182.6 C373.6 178.8 375.9 178.6 385.9 179.7 C395.9 180.8 392.5 186.1 400.3 186.9 C408.1 187.7 407.9 185.5 415.0 182.6 C422.1 179.7 418.7 176.2 427.0 176.0 C435.3 175.8 437.7 182.8 446.0 182.0 C454.3 181.2 448.4 176.2 458.0 173.0 C467.6 169.8 475.6 170.8 482.0 170.0"/><path d="M306.8 186.9 C309.1 188.8 310.4 187.6 315.4 194.1 C320.4 200.6 321.3 202.9 325.5 211.4 C329.7 219.9 328.1 217.4 331.2 225.8 C334.3 234.2 335.5 238.4 337.0 243.0"/><path d="M286.6 214.3 C292.4 213.5 298.6 210.7 308.2 211.4 C317.8 212.1 315.7 211.7 322.6 217.1 C329.5 222.5 329.5 225.3 334.1 231.5 C338.7 237.7 338.4 237.9 339.9 240.2"/><path d="M273.6 240.2 C279.0 238.7 283.0 235.2 293.8 234.4 C304.6 233.6 304.0 234.2 314.0 237.3 C324.0 240.4 326.6 243.6 331.2 245.9"/><path d="M270.8 251.7 C275.4 253.2 277.3 255.2 288.0 257.5 C298.7 259.8 298.7 259.6 311.0 260.3 C323.3 261.0 327.9 260.3 334.0 260.3"/><path d="M415.0 191.2 C410.3 193.5 406.8 195.3 397.5 199.9 C388.2 204.5 390.2 204.7 380.2 208.5 C370.2 212.3 369.2 211.2 360.0 214.3 C350.8 217.4 349.4 218.5 345.6 220.0"/><path d="M410.0 182.6 C414.6 185.7 417.3 188.7 427.3 194.1 C437.3 199.5 438.9 199.6 447.4 202.7 C455.9 205.8 455.9 204.8 459.0 205.6"/><path d="M502.0 214.0 C502.8 219.4 500.4 225.1 505.0 234.4 C509.6 243.7 510.9 242.6 519.4 248.8 C527.9 255.0 529.0 252.1 536.7 257.5 C544.4 262.9 545.1 265.9 548.2 269.0"/><path d="M459.0 205.6 C459.7 210.2 458.0 212.2 461.8 222.9 C465.6 233.6 467.1 235.2 473.3 245.9 C479.5 256.6 481.8 258.6 484.9 263.2"/><path d="M463.0 194.0 C468.6 197.2 473.9 203.9 484.0 206.0 C494.1 208.1 491.9 202.0 501.0 202.0 C510.1 202.0 508.9 202.5 518.0 206.0 C527.1 209.5 529.4 209.1 535.0 215.0 C540.6 220.9 539.0 220.3 539.0 228.0 C539.0 235.7 533.9 235.2 535.0 244.0 C536.1 252.8 539.5 250.9 543.0 261.0 C546.5 271.1 546.7 276.4 548.0 282.0"/><path d="M484.0 219.0 C489.6 221.4 494.9 221.3 505.0 228.0 C515.1 234.7 517.5 233.9 522.0 244.0 C526.5 254.1 519.6 255.9 522.0 266.0 C524.4 276.1 529.7 273.2 531.0 282.0 C532.3 290.8 528.1 294.5 527.0 299.0"/><path d="M467.0 257.0 C469.4 261.5 468.0 266.0 476.0 274.0 C484.0 282.0 487.9 282.5 497.0 287.0 C506.1 291.5 506.5 289.9 510.0 291.0"/><path d="M270.8 281.5 C276.2 285.3 280.9 290.5 290.9 295.9 C300.9 301.3 299.7 299.4 308.2 301.7 C316.7 304.0 318.8 303.8 322.6 304.6"/><path d="M285.2 307.4 C289.8 308.9 292.4 308.6 302.4 313.2 C312.4 317.8 313.4 318.6 322.6 324.7 C331.8 330.8 327.8 329.3 337.0 336.2 C346.2 343.1 347.1 345.2 357.1 350.6 C367.1 356.0 362.9 355.6 374.4 356.4 C385.9 357.2 389.5 355.0 400.3 353.5 C411.1 352.0 411.1 351.4 415.0 350.6"/><path d="M299.6 339.1 C305.0 340.6 309.0 341.1 319.7 344.9 C330.4 348.7 329.2 348.1 339.9 353.5 C350.6 358.9 349.3 359.6 360.0 365.0 C370.7 370.4 370.2 371.4 380.2 373.7 C390.2 376.0 388.2 375.2 397.5 373.7 C406.8 372.2 410.3 369.4 415.0 367.9"/><path d="M331.2 362.1 C336.6 365.2 339.9 367.5 351.4 373.7 C362.9 379.9 363.7 380.6 374.4 385.2 C385.1 389.8 380.9 390.3 391.7 391.0 C402.5 391.7 408.8 388.8 415.0 388.0"/><path d="M360.0 278.6 C357.7 285.5 358.3 293.1 351.4 304.6 C344.5 316.1 338.7 317.2 334.1 321.8"/><path d="M334.0 290.0 C331.0 297.7 325.6 311.3 322.6 319.0"/><path d="M476.2 313.2 C481.6 310.1 484.9 307.1 496.4 301.7 C507.9 296.3 507.9 296.8 519.4 293.0 C530.9 289.2 531.1 290.4 539.6 287.3 C548.1 284.2 548.0 283.0 551.1 281.5"/><path d="M456.0 333.3 C461.4 331.0 463.1 328.5 476.2 324.7 C489.3 320.9 489.6 322.8 505.0 319.0 C520.4 315.2 522.7 311.8 533.8 310.3 C544.9 308.8 543.3 312.4 546.8 313.2"/><path d="M421.5 339.1 C427.7 339.1 432.3 337.6 444.6 339.1 C456.9 340.6 453.8 344.9 467.6 344.9 C481.4 344.9 481.0 342.2 496.4 339.1 C511.8 336.0 512.9 336.4 525.2 333.3 C537.5 330.2 537.8 329.1 542.4 327.6"/><path d="M410.0 356.4 C416.1 354.9 421.5 350.6 433.0 350.6 C444.5 350.6 441.7 354.1 453.2 356.4 C464.7 358.7 464.7 359.3 476.2 359.3 C487.7 359.3 487.2 357.2 496.4 356.4 C505.6 355.6 507.0 356.4 510.8 356.4"/><path d="M427.3 367.9 C434.2 367.9 437.8 367.1 453.2 367.9 C468.6 368.7 476.4 370.0 484.9 370.8"/><path d="M410.0 385.2 C416.1 385.2 421.5 386.7 433.0 385.2 C444.5 383.7 440.9 380.2 453.2 379.4 C465.5 378.6 472.2 381.5 479.1 382.3"/><path d="M505.0 275.8 C502.7 279.6 501.8 283.3 496.4 290.2 C491.0 297.1 490.3 295.6 484.9 301.7 C479.5 307.8 478.5 310.1 476.2 313.2"/></g>
<g fill="none" stroke="#b0b0b0" stroke-width="2.2" filter="url(#bl15)" style="mix-blend-mode:screen"><path d="M305.0 187.0 C309.7 188.1 311.8 189.3 322.6 191.2 C333.4 193.1 334.9 196.4 345.6 194.1 C356.3 191.8 352.2 186.4 362.9 182.6 C373.6 178.8 375.9 178.6 385.9 179.7 C395.9 180.8 392.5 186.1 400.3 186.9 C408.1 187.7 407.9 185.5 415.0 182.6 C422.1 179.7 418.7 176.2 427.0 176.0 C435.3 175.8 437.7 182.8 446.0 182.0 C454.3 181.2 448.4 176.2 458.0 173.0 C467.6 169.8 475.6 170.8 482.0 170.0"/><path d="M306.8 186.9 C309.1 188.8 310.4 187.6 315.4 194.1 C320.4 200.6 321.3 202.9 325.5 211.4 C329.7 219.9 328.1 217.4 331.2 225.8 C334.3 234.2 335.5 238.4 337.0 243.0"/><path d="M286.6 214.3 C292.4 213.5 298.6 210.7 308.2 211.4 C317.8 212.1 315.7 211.7 322.6 217.1 C329.5 222.5 329.5 225.3 334.1 231.5 C338.7 237.7 338.4 237.9 339.9 240.2"/><path d="M273.6 240.2 C279.0 238.7 283.0 235.2 293.8 234.4 C304.6 233.6 304.0 234.2 314.0 237.3 C324.0 240.4 326.6 243.6 331.2 245.9"/><path d="M270.8 251.7 C275.4 253.2 277.3 255.2 288.0 257.5 C298.7 259.8 298.7 259.6 311.0 260.3 C323.3 261.0 327.9 260.3 334.0 260.3"/><path d="M415.0 191.2 C410.3 193.5 406.8 195.3 397.5 199.9 C388.2 204.5 390.2 204.7 380.2 208.5 C370.2 212.3 369.2 211.2 360.0 214.3 C350.8 217.4 349.4 218.5 345.6 220.0"/><path d="M410.0 182.6 C414.6 185.7 417.3 188.7 427.3 194.1 C437.3 199.5 438.9 199.6 447.4 202.7 C455.9 205.8 455.9 204.8 459.0 205.6"/><path d="M502.0 214.0 C502.8 219.4 500.4 225.1 505.0 234.4 C509.6 243.7 510.9 242.6 519.4 248.8 C527.9 255.0 529.0 252.1 536.7 257.5 C544.4 262.9 545.1 265.9 548.2 269.0"/><path d="M459.0 205.6 C459.7 210.2 458.0 212.2 461.8 222.9 C465.6 233.6 467.1 235.2 473.3 245.9 C479.5 256.6 481.8 258.6 484.9 263.2"/><path d="M463.0 194.0 C468.6 197.2 473.9 203.9 484.0 206.0 C494.1 208.1 491.9 202.0 501.0 202.0 C510.1 202.0 508.9 202.5 518.0 206.0 C527.1 209.5 529.4 209.1 535.0 215.0 C540.6 220.9 539.0 220.3 539.0 228.0 C539.0 235.7 533.9 235.2 535.0 244.0 C536.1 252.8 539.5 250.9 543.0 261.0 C546.5 271.1 546.7 276.4 548.0 282.0"/><path d="M484.0 219.0 C489.6 221.4 494.9 221.3 505.0 228.0 C515.1 234.7 517.5 233.9 522.0 244.0 C526.5 254.1 519.6 255.9 522.0 266.0 C524.4 276.1 529.7 273.2 531.0 282.0 C532.3 290.8 528.1 294.5 527.0 299.0"/><path d="M467.0 257.0 C469.4 261.5 468.0 266.0 476.0 274.0 C484.0 282.0 487.9 282.5 497.0 287.0 C506.1 291.5 506.5 289.9 510.0 291.0"/><path d="M270.8 281.5 C276.2 285.3 280.9 290.5 290.9 295.9 C300.9 301.3 299.7 299.4 308.2 301.7 C316.7 304.0 318.8 303.8 322.6 304.6"/><path d="M285.2 307.4 C289.8 308.9 292.4 308.6 302.4 313.2 C312.4 317.8 313.4 318.6 322.6 324.7 C331.8 330.8 327.8 329.3 337.0 336.2 C346.2 343.1 347.1 345.2 357.1 350.6 C367.1 356.0 362.9 355.6 374.4 356.4 C385.9 357.2 389.5 355.0 400.3 353.5 C411.1 352.0 411.1 351.4 415.0 350.6"/><path d="M299.6 339.1 C305.0 340.6 309.0 341.1 319.7 344.9 C330.4 348.7 329.2 348.1 339.9 353.5 C350.6 358.9 349.3 359.6 360.0 365.0 C370.7 370.4 370.2 371.4 380.2 373.7 C390.2 376.0 388.2 375.2 397.5 373.7 C406.8 372.2 410.3 369.4 415.0 367.9"/><path d="M331.2 362.1 C336.6 365.2 339.9 367.5 351.4 373.7 C362.9 379.9 363.7 380.6 374.4 385.2 C385.1 389.8 380.9 390.3 391.7 391.0 C402.5 391.7 408.8 388.8 415.0 388.0"/><path d="M360.0 278.6 C357.7 285.5 358.3 293.1 351.4 304.6 C344.5 316.1 338.7 317.2 334.1 321.8"/><path d="M334.0 290.0 C331.0 297.7 325.6 311.3 322.6 319.0"/><path d="M476.2 313.2 C481.6 310.1 484.9 307.1 496.4 301.7 C507.9 296.3 507.9 296.8 519.4 293.0 C530.9 289.2 531.1 290.4 539.6 287.3 C548.1 284.2 548.0 283.0 551.1 281.5"/><path d="M456.0 333.3 C461.4 331.0 463.1 328.5 476.2 324.7 C489.3 320.9 489.6 322.8 505.0 319.0 C520.4 315.2 522.7 311.8 533.8 310.3 C544.9 308.8 543.3 312.4 546.8 313.2"/><path d="M421.5 339.1 C427.7 339.1 432.3 337.6 444.6 339.1 C456.9 340.6 453.8 344.9 467.6 344.9 C481.4 344.9 481.0 342.2 496.4 339.1 C511.8 336.0 512.9 336.4 525.2 333.3 C537.5 330.2 537.8 329.1 542.4 327.6"/><path d="M410.0 356.4 C416.1 354.9 421.5 350.6 433.0 350.6 C444.5 350.6 441.7 354.1 453.2 356.4 C464.7 358.7 464.7 359.3 476.2 359.3 C487.7 359.3 487.2 357.2 496.4 356.4 C505.6 355.6 507.0 356.4 510.8 356.4"/><path d="M427.3 367.9 C434.2 367.9 437.8 367.1 453.2 367.9 C468.6 368.7 476.4 370.0 484.9 370.8"/><path d="M410.0 385.2 C416.1 385.2 421.5 386.7 433.0 385.2 C444.5 383.7 440.9 380.2 453.2 379.4 C465.5 378.6 472.2 381.5 479.1 382.3"/><path d="M505.0 275.8 C502.7 279.6 501.8 283.3 496.4 290.2 C491.0 297.1 490.3 295.6 484.9 301.7 C479.5 307.8 478.5 310.1 476.2 313.2"/></g>
</mask>
</defs>
<rect x="0" y="0" width="1000" height="521" fill="url(#mesh)" mask="url(#meshmask)"/>
<path d="M413.3 53 V258" stroke="#1f3f70" stroke-width="0.9" stroke-dasharray="1.2 1"/>
<circle cx="413.2" cy="270.7" r="6.2" fill="none" stroke="#e8e8e8" stroke-width="1.5"/>
<circle cx="413.2" cy="270.7" r="6.2" fill="none" stroke="#c01818" stroke-width="1.5" stroke-dasharray="2.4 2.47"/>
<rect x="412.2" y="269.7" width="2" height="2" fill="#f0a030"/>
</svg>
<!--/MESH-->
<div class="t" style="left:50.8px;top:55.5px;color:#e6e6e6;text-shadow:0 0 1px #000,0 0 1px #000">Camera Perspective</div>
<div class="t" style="left:50.8px;top:68.5px;color:#e6e6e6;text-shadow:0 0 1px #000,0 0 1px #000">(0) AI | Icosphere</div>


<!-- NAV GIZMO -->
<svg style="left:0;top:0" width="1000" height="521" viewBox="0 0 1000 521">
<line x1="793.8" y1="83.5" x2="793.8" y2="62.8" stroke="#3d8ee6" stroke-width="1.3"/>
<line x1="793.8" y1="83.5" x2="814.7" y2="83.5" stroke="#7ecc1d" stroke-width="1.3"/>
<circle cx="772.3" cy="83.5" r="4.6" fill="#5a8a22"/>
<circle cx="793.8" cy="105" r="4.6" fill="#2c5a95"/>
<circle cx="793.8" cy="62.8" r="4.8" fill="#3d8ee6"/>
<circle cx="814.7" cy="83.5" r="4.8" fill="#80c91e"/>
<circle cx="793.8" cy="83.5" r="4.8" fill="#f2385a"/>
<text x="793.8" y="65.6" font-family="Liberation Sans" font-size="7.2" fill="#111" text-anchor="middle">Z</text>
<text x="793.8" y="86.3" font-family="Liberation Sans" font-size="7.2" fill="#111" text-anchor="middle">X</text>
<text x="814.7" y="86.3" font-family="Liberation Sans" font-size="7.2" fill="#111" text-anchor="middle">Y</text>
<circle cx="811.2" cy="119.3" r="8" fill="#1c1c1c"/>
<circle cx="811.2" cy="139.5" r="8" fill="#1c1c1c"/>
<circle cx="811.2" cy="159.3" r="8" fill="#1c1c1c"/>
<circle cx="812.3" cy="118.2" r="2.8" fill="none" stroke="#ddd" stroke-width="0.9"/>
<path d="M812.3 116.6 V119.8 M810.7 118.2 H813.9" stroke="#ddd" stroke-width="0.7"/>
<path d="M810.3 120.2 L807.2 123.3" stroke="#ddd" stroke-width="1.3"/>
<path d="M807.5 141 C807 139 806.8 137 807.6 136.5 C808.3 136.2 808.6 137.5 808.8 138.5 L808.8 134.5 C808.8 133.6 810 133.6 810 134.5 L810 138 L810.2 133.8 C810.2 132.9 811.4 132.9 811.4 133.8 L811.4 138 L811.7 134.3 C811.7 133.5 812.9 133.5 812.9 134.3 L812.9 138.5 L813.7 136.8 C814.1 136 815 136.3 814.8 137.2 L813.5 141.5 C812.8 143.5 811.5 144.2 810 144.2 C808.6 144.2 807.9 142.5 807.5 141 Z" fill="#ddd"/>
<circle cx="808.8" cy="156.3" r="2" fill="#ddd"/><circle cx="812.5" cy="156.3" r="2" fill="#ddd"/>
<rect x="807" y="158" width="7.5" height="4.6" fill="#ddd"/><path d="M814.5 159.5 L817 158 V162.5 L814.5 161 Z" fill="#ddd"/>
<path d="M824.5 63 L822.3 65.5 L824.5 68" stroke="#888" stroke-width="0.8" fill="none"/>
</svg>

<!-- TOOLBAR -->
<div class="a" style="left:5.4px;top:57.4px;width:26.9px;height:43.6px;background:#2c2c2c;border-radius:3px"></div>
<div class="a" style="left:5.4px;top:57.4px;width:26.9px;height:21.6px;background:#4772b3;border-radius:3px 3px 0 0"></div>
<svg style="left:29px;top:75.5px" width="3" height="3" viewBox="0 0 3 3"><path d="M3 0 V3 H0 Z" fill="#cfd8e8"/></svg>
<div class="a" style="left:12.5px;top:61px;width:13px;height:13px;border:1.2px dashed #e5a23a;border-radius:1px"></div>
<svg style="left:16px;top:63.5px" width="8" height="9" viewBox="0 0 8 9"><path d="M1 0.5 L1 8 L3 6 L6.8 6.2 Z" fill="#e8e8e8"/></svg>
<svg style="left:10.8px;top:82.8px" width="15" height="15" viewBox="0 0 15 15"><circle cx="7.5" cy="7.5" r="6.6" fill="none" stroke="#e8e8e8" stroke-width="1.1" stroke-dasharray="2.6 1.55"/><circle cx="7.5" cy="7.5" r="6.6" fill="none" stroke="#c03838" stroke-width="1.1" stroke-dasharray="1.55 2.6" stroke-dashoffset="1.55"/><path d="M7.5 3 V6 M7.5 9 V12 M3 7.5 H6 M9 7.5 H12" stroke="#ddd" stroke-width="0.8"/></svg>

<div class="a" style="left:5.4px;top:105.5px;width:26.9px;height:89.5px;background:#2c2c2c;border-radius:3px"></div>
<svg style="left:11.8px;top:110.4px" width="14" height="14" viewBox="0 0 14 14"><path d="M7 1 V13 M1 7 H13" stroke="#ddd" stroke-width="0.9"/><path d="M7 0.5 L5.3 2.8 H8.7 Z M7 13.5 L5.3 11.2 H8.7 Z M0.5 7 L2.8 5.3 V8.7 Z M13.5 7 L11.2 5.3 V8.7 Z" fill="#e5e5e5"/><circle cx="7" cy="7" r="1" fill="#bbb"/></svg>
<svg style="left:11.8px;top:132px" width="14" height="14" viewBox="0 0 14 14"><path d="M2.5 5 A5 5 0 0 1 11.5 5 M11.5 9 A5 5 0 0 1 2.5 9" stroke="#ddd" stroke-width="0.9" fill="none"/><path d="M1 7 L4 7 L2.5 9.5 Z M13 7 L10 7 L11.5 4.5 Z" fill="#e5e5e5"/><rect x="5.6" y="5.6" width="2.8" height="2.8" transform="rotate(45 7 7)" fill="#ccc"/></svg>
<svg style="left:11.8px;top:155px" width="14" height="14" viewBox="0 0 14 14"><rect x="5" y="1.5" width="7.5" height="7.5" fill="none" stroke="#ccc" stroke-width="0.9"/><rect x="1.5" y="5.5" width="6.5" height="7" fill="#ddd"/><path d="M8 6 L11.5 2.5 M9 2.5 H11.5 V5" stroke="#ddd" stroke-width="0.9" fill="none"/></svg>
<svg style="left:29px;top:169.5px" width="3" height="3" viewBox="0 0 3 3"><path d="M3 0 V3 H0 Z" fill="#999"/></svg>
<svg style="left:11.3px;top:176.9px" width="15" height="15" viewBox="0 0 15 15"><circle cx="7.5" cy="7.5" r="6" fill="none" stroke="#ddd" stroke-width="0.9"/><rect x="5" y="5" width="5" height="5" fill="#ddd"/><path d="M7.5 1.3 L6.3 2.8 H8.7 Z M7.5 13.7 L6.3 12.2 H8.7 Z M1.3 7.5 L2.8 6.3 V8.7 Z M13.7 7.5 L12.2 6.3 V8.7 Z" fill="#ccc"/></svg>
<svg style="left:29px;top:191px" width="3" height="3" viewBox="0 0 3 3"><path d="M3 0 V3 H0 Z" fill="#999"/></svg>

<div class="a" style="left:5.4px;top:199.2px;width:26.9px;height:44px;background:#2c2c2c;border-radius:3px"></div>
<svg style="left:11px;top:203px" width="16" height="14" viewBox="0 0 16 14"><path d="M2 9.5 L10.5 1.5 L12.5 3.5 L4 11.5 L1.5 12 Z" fill="none" stroke="#e0e0e0" stroke-width="1"/><path d="M2.5 12.5 C6 8 8 13 14 9.5" stroke="#6ab88a" stroke-width="0.9" fill="none"/></svg>
<svg style="left:29px;top:217.5px" width="3" height="3" viewBox="0 0 3 3"><path d="M3 0 V3 H0 Z" fill="#999"/></svg>
<svg style="left:12px;top:225px" width="14" height="15" viewBox="0 0 14 15"><path d="M4 13 A8 8 0 0 1 12 5 V13 Z" fill="#8fd0a0"/><path d="M1 14 H13 M2.5 1 V14 M4 1 H1" stroke="#ddd" stroke-width="1.1" fill="none"/></svg>

<!-- outliner -->
<div class="a" style="left:828px;top:17.7px;width:171px;height:157.5px;background:#282828;border-radius:3px"></div>

<!-- OUTLINER -->
<div class="a" style="left:828px;top:17.7px;width:171px;height:17px;background:#363636;border-radius:3px 3px 0 0"></div>
<div class="a" style="left:828px;top:47.7px;width:171px;height:13px;background:#2c2c2c"></div>
<div class="a" style="left:828px;top:73.7px;width:171px;height:13px;background:#2c2c2c"></div>
<div class="a" style="left:828px;top:99.7px;width:171px;height:13px;background:#2c2c2c"></div>
<div class="a" style="left:828px;top:125.7px;width:171px;height:13px;background:#2c2c2c"></div>
<div class="a" style="left:828px;top:151.7px;width:171px;height:13px;background:#2c2c2c"></div>
<div class="btn" style="left:833.5px;top:20.3px;width:19.3px;height:11.2px;background:#282828"></div>
<svg style="left:835.5px;top:21.2px" width="16" height="10" viewBox="0 0 16 10"><rect x="0.8" y="0.5" width="3" height="2.2" fill="#ddd"/><path d="M2.3 2.7 V8 H5" stroke="#ccc" stroke-width="0.8" fill="none"/><rect x="5" y="4" width="5.2" height="2" fill="#ddd"/><rect x="5" y="7" width="5.2" height="2" fill="#ddd"/><path d="M2.3 5 H5" stroke="#ccc" stroke-width="0.8"/></svg>
<svg style="left:845.5px;top:24.5px" width="6" height="4" viewBox="0 0 6 4"><path d="M0.8 0.8 L3 3 L5.2 0.8" stroke="#c0c0c0" stroke-width="0.9" fill="none"/></svg>
<div class="btn" style="left:857px;top:20.3px;width:19.7px;height:11.2px;background:#282828"></div>
<svg style="left:859px;top:21.2px" width="10" height="10" viewBox="0 0 10 10"><rect x="3" y="0.8" width="6.2" height="6" fill="#aaa"/><rect x="1.5" y="2.3" width="6.2" height="6" fill="#777"/><rect x="0.5" y="3.3" width="6.2" height="6" fill="#555"/><rect x="3" y="0.8" width="6.2" height="6" fill="none" stroke="#ddd" stroke-width="0.7"/><path d="M4 6 L6 3 L8 6 Z" fill="#eee"/></svg>
<svg style="left:869.5px;top:24.5px" width="6" height="4" viewBox="0 0 6 4"><path d="M0.8 0.8 L3 3 L5.2 0.8" stroke="#c0c0c0" stroke-width="0.9" fill="none"/></svg>
<div class="btn" style="left:888px;top:20.4px;width:74.6px;height:11.5px;background:#1e1e1e;border-radius:3px"></div>
<svg style="left:890px;top:21.5px" width="10" height="10" viewBox="0 0 10 10"><circle cx="5.8" cy="4" r="2.9" fill="none" stroke="#ddd" stroke-width="0.9"/><path d="M3.7 6.2 L0.8 9.2" stroke="#ddd" stroke-width="1.1"/></svg>
<div class="btn" style="left:974.2px;top:20.4px;width:19.5px;height:11.5px;background:#282828"></div>
<svg style="left:976px;top:21.5px" width="10" height="10" viewBox="0 0 10 10"><path d="M0.8 0.8 H8.8 L5.5 4.8 V9.2 L4.2 8 V4.8 Z" fill="none" stroke="#ddd" stroke-width="0.9"/></svg>
<svg style="left:986.5px;top:24.5px" width="6" height="4" viewBox="0 0 6 4"><path d="M0.8 0.8 L3 3 L5.2 0.8" stroke="#c0c0c0" stroke-width="0.9" fill="none"/></svg>
<svg style="left:842px;top:36.5px" width="10" height="10" viewBox="0 0 10 10"><rect x="0.6" y="0.8" width="8.8" height="2" fill="none" stroke="#d8d8d8" stroke-width="0.8"/><path d="M1.5 2.8 V9.2 H8.5 V2.8" fill="none" stroke="#d8d8d8" stroke-width="0.8"/><rect x="4.2" y="4.6" width="1.6" height="1.5" fill="#d8d8d8"/></svg><div class="t" style="left:855.8px;top:35.7px;color:#e0e0e0">Scene Collection</div><svg style="left:844.3px;top:52.0px" width="5" height="5" viewBox="0 0 5 5"><path d="M0.3 0.8 H4.7 L2.5 4.5 Z" fill="#d8d8d8"/></svg><div class="a" style="left:856.3px;top:50.400000000000006px;width:7.5px;height:7.5px;background:#dcdcdc;border-radius:1.5px"></div><svg style="left:856.3px;top:50.400000000000006px" width="8" height="8" viewBox="0 0 8 8"><path d="M1.5 3.8 L3.2 5.6 L6.2 1.8" stroke="#222" stroke-width="1.1" fill="none"/></svg><svg style="left:868px;top:49.5px" width="10" height="10" viewBox="0 0 10 10"><rect x="0.6" y="0.8" width="8.8" height="2" fill="none" stroke="#d8d8d8" stroke-width="0.8"/><path d="M1.5 2.8 V9.2 H8.5 V2.8" fill="none" stroke="#d8d8d8" stroke-width="0.8"/><rect x="4.2" y="4.6" width="1.6" height="1.5" fill="#d8d8d8"/></svg><div class="t" style="left:881.8px;top:48.7px;color:#e0e0e0">Collection</div><svg style="left:983.8px;top:50.2px" width="9" height="8" viewBox="0 0 9 8"><path d="M0.6 4 C2.5 0.3 6.5 0.3 8.4 4 C6.5 7.7 2.5 7.7 0.6 4 Z" fill="none" stroke="#e4e4e4" stroke-width="1"/><circle cx="4.5" cy="4" r="1.7" fill="#e4e4e4"/><circle cx="4.5" cy="4" r="0.6" fill="#333"/></svg><svg style="left:844.3px;top:117.0px" width="5" height="5" viewBox="0 0 5 5"><path d="M0.3 0.8 H4.7 L2.5 4.5 Z" fill="#d8d8d8"/></svg><div class="a" style="left:856.3px;top:115.4px;width:7.5px;height:7.5px;background:#dcdcdc;border-radius:1.5px"></div><svg style="left:856.3px;top:115.4px" width="8" height="8" viewBox="0 0 8 8"><path d="M1.5 3.8 L3.2 5.6 L6.2 1.8" stroke="#222" stroke-width="1.1" fill="none"/></svg><div class="a" style="left:866px;top:112.9px;width:13.5px;height:12.6px;background:#444;border-radius:3px"></div><svg style="left:868px;top:114.5px" width="10" height="10" viewBox="0 0 10 10"><rect x="0.6" y="0.8" width="8.8" height="2" fill="none" stroke="#d8d8d8" stroke-width="0.8"/><path d="M1.5 2.8 V9.2 H8.5 V2.8" fill="none" stroke="#d8d8d8" stroke-width="0.8"/><rect x="4.2" y="4.6" width="1.6" height="1.5" fill="#d8d8d8"/></svg><div class="t" style="left:881.8px;top:113.7px;color:#e0e0e0">AI</div><svg style="left:983.8px;top:115.2px" width="9" height="8" viewBox="0 0 9 8"><path d="M0.6 4 C2.5 0.3 6.5 0.3 8.4 4 C6.5 7.7 2.5 7.7 0.6 4 Z" fill="none" stroke="#e4e4e4" stroke-width="1"/><circle cx="4.5" cy="4" r="1.7" fill="#e4e4e4"/><circle cx="4.5" cy="4" r="0.6" fill="#333"/></svg><div class="a" style="left:859.3px;top:58.7px;width:0.8px;height:47.5px;background:#6a6a6a"></div><div class="a" style="left:859.3px;top:123.7px;width:0.8px;height:34.5px;background:#6a6a6a"></div><div class="a" style="left:859.3px;top:66.9px;width:7px;height:0.8px;background:#6a6a6a"></div><svg style="left:857.5px;top:65.0px" width="4" height="5" viewBox="0 0 4 5"><path d="M0.5 0.3 L3.8 2.5 L0.5 4.7 Z" fill="#cfcfcf"/></svg><svg style="left:868px;top:62.5px" width="10" height="10" viewBox="0 0 10 10"><path d="M1 1.5 H4 A4 4 0 0 1 4 9.2 H1" fill="none" stroke="#b0703a" stroke-width="1.5"/></svg><div class="t" style="left:881.8px;top:61.7px;color:#8c8c8c">BezierCircle</div><svg style="left:983.8px;top:63.2px" width="9" height="8" viewBox="0 0 9 8"><path d="M0.6 4 C2.5 0.3 6.5 0.3 8.4 4 C6.5 7.7 2.5 7.7 0.6 4 Z" fill="none" stroke="#e4e4e4" stroke-width="1"/><circle cx="4.5" cy="4" r="1.7" fill="#e4e4e4"/><circle cx="4.5" cy="4" r="0.6" fill="#333"/></svg><div class="a" style="left:859.3px;top:79.9px;width:7px;height:0.8px;background:#6a6a6a"></div><svg style="left:857.5px;top:78.0px" width="4" height="5" viewBox="0 0 4 5"><path d="M0.5 0.3 L3.8 2.5 L0.5 4.7 Z" fill="#cfcfcf"/></svg><svg style="left:868px;top:75.5px" width="10" height="10" viewBox="0 0 10 10"><circle cx="6.5" cy="2.8" r="2" fill="#e38c3b"/><circle cx="2.8" cy="3.5" r="1.6" fill="#e38c3b"/><rect x="1" y="5" width="6.5" height="3.8" fill="#e38c3b"/><path d="M7.5 6 L9.5 5 V8.8 L7.5 7.8 Z" fill="#e38c3b"/></svg><div class="t" style="left:881.8px;top:74.7px;color:#e0e0e0">Camera</div><svg style="left:983.8px;top:76.2px" width="9" height="8" viewBox="0 0 9 8"><path d="M0.6 4 C2.5 0.3 6.5 0.3 8.4 4 C6.5 7.7 2.5 7.7 0.6 4 Z" fill="none" stroke="#e4e4e4" stroke-width="1"/><circle cx="4.5" cy="4" r="1.7" fill="#e4e4e4"/><circle cx="4.5" cy="4" r="0.6" fill="#333"/></svg><div class="a" style="left:859.3px;top:92.9px;width:7px;height:0.8px;background:#6a6a6a"></div><svg style="left:857.5px;top:91.0px" width="4" height="5" viewBox="0 0 4 5"><path d="M0.5 0.3 L3.8 2.5 L0.5 4.7 Z" fill="#cfcfcf"/></svg><svg style="left:868px;top:88.5px" width="10" height="10" viewBox="0 0 10 10"><path d="M1 1.2 H9 L5 9 Z" fill="none" stroke="#b0703a" stroke-width="1.1"/><path d="M3.5 3 H6.5 L5 6 Z" fill="#b0703a" opacity="0.5"/></svg><div class="t" style="left:881.8px;top:87.7px;color:#8c8c8c">Guide</div><svg style="left:983.8px;top:89.2px" width="9" height="8" viewBox="0 0 9 8"><path d="M0.6 4 C2.5 0.3 6.5 0.3 8.4 4 C6.5 7.7 2.5 7.7 0.6 4 Z" fill="none" stroke="#e4e4e4" stroke-width="1"/><circle cx="4.5" cy="4" r="1.7" fill="#e4e4e4"/><circle cx="4.5" cy="4" r="0.6" fill="#333"/></svg><div class="a" style="left:859.3px;top:105.9px;width:7px;height:0.8px;background:#6a6a6a"></div><svg style="left:857.5px;top:104.0px" width="4" height="5" viewBox="0 0 4 5"><path d="M0.5 0.3 L3.8 2.5 L0.5 4.7 Z" fill="#cfcfcf"/></svg><svg style="left:868px;top:101.5px" width="10" height="10" viewBox="0 0 10 10"><circle cx="5" cy="4" r="3.5" fill="#e38c3b"/><rect x="3.5" y="7.5" width="3" height="2" fill="#e38c3b"/><path d="M3.5 4 L5 5.5 L6.5 4" stroke="#333" stroke-width="0.6" fill="none"/></svg><div class="t" style="left:881.8px;top:100.7px;color:#e0e0e0">Light</div><svg style="left:983.8px;top:102.2px" width="9" height="8" viewBox="0 0 9 8"><path d="M0.6 4 C2.5 0.3 6.5 0.3 8.4 4 C6.5 7.7 2.5 7.7 0.6 4 Z" fill="none" stroke="#e4e4e4" stroke-width="1"/><circle cx="4.5" cy="4" r="1.7" fill="#e4e4e4"/><circle cx="4.5" cy="4" r="0.6" fill="#333"/></svg><div class="a" style="left:859.3px;top:131.9px;width:7px;height:0.8px;background:#6a6a6a"></div><svg style="left:857.5px;top:130.0px" width="4" height="5" viewBox="0 0 4 5"><path d="M0.5 0.3 L3.8 2.5 L0.5 4.7 Z" fill="#cfcfcf"/></svg><svg style="left:868px;top:127.5px" width="10" height="10" viewBox="0 0 10 10"><path d="M1 1.2 H9 L5 9 Z" fill="none" stroke="#b0703a" stroke-width="1.1"/><path d="M3.5 3 H6.5 L5 6 Z" fill="#b0703a" opacity="0.5"/></svg><div class="t" style="left:881.8px;top:126.7px;color:#8c8c8c">Core</div><svg style="left:983.8px;top:128.2px" width="9" height="8" viewBox="0 0 9 8"><path d="M0.5 3 C3 6 6 6 8.5 3" fill="none" stroke="#bbb" stroke-width="0.8"/></svg><div class="a" style="left:859.3px;top:144.9px;width:7px;height:0.8px;background:#6a6a6a"></div><svg style="left:857.5px;top:143.0px" width="4" height="5" viewBox="0 0 4 5"><path d="M0.5 0.3 L3.8 2.5 L0.5 4.7 Z" fill="#cfcfcf"/></svg><svg style="left:868px;top:140.5px" width="10" height="10" viewBox="0 0 10 10"><path d="M1 1.2 H9 L5 9 Z" fill="none" stroke="#b0703a" stroke-width="1.1"/><path d="M3.5 3 H6.5 L5 6 Z" fill="#b0703a" opacity="0.5"/></svg><div class="t" style="left:881.8px;top:139.7px;color:#8c8c8c">Experiment</div><svg style="left:983.8px;top:141.2px" width="9" height="8" viewBox="0 0 9 8"><path d="M0.5 3 C3 6 6 6 8.5 3" fill="none" stroke="#bbb" stroke-width="0.8"/></svg><div class="a" style="left:859.3px;top:157.9px;width:7px;height:0.8px;background:#6a6a6a"></div><svg style="left:857.5px;top:156.0px" width="4" height="5" viewBox="0 0 4 5"><path d="M0.5 0.3 L3.8 2.5 L0.5 4.7 Z" fill="#cfcfcf"/></svg><div class="a" style="left:866px;top:151.9px;width:13.5px;height:12.6px;background:#555;border-radius:3px"></div><svg style="left:868px;top:153.5px" width="10" height="10" viewBox="0 0 10 10"><path d="M1 1.2 H9 L5 9 Z" fill="none" stroke="#e38c3b" stroke-width="1.1"/><path d="M3.5 3 H6.5 L5 6 Z" fill="#e38c3b" opacity="0.5"/></svg><div class="t" style="left:881.8px;top:152.7px;color:#e0e0e0">Icosphere</div><svg style="left:983.8px;top:154.2px" width="9" height="8" viewBox="0 0 9 8"><path d="M0.6 4 C2.5 0.3 6.5 0.3 8.4 4 C6.5 7.7 2.5 7.7 0.6 4 Z" fill="none" stroke="#e4e4e4" stroke-width="1"/><circle cx="4.5" cy="4" r="1.7" fill="#e4e4e4"/><circle cx="4.5" cy="4" r="0.6" fill="#333"/></svg><svg style="left:937.5px;top:62.5px" width="10" height="10" viewBox="0 0 10 10"><path d="M2 8.5 C-0.5 6 2 1 5.5 1.5 C8.5 2 9 5 7 6 L8 8 M6 6.5 L8 8 L5.5 8.5" fill="none" stroke="#2bb58a" stroke-width="0.9"/></svg><div class="a" style="left:922.5px;top:73.9px;width:12.5px;height:12.6px;background:#555;border-radius:3px"></div><svg style="left:923.8px;top:75.3px" width="10" height="10" viewBox="0 0 10 10"><circle cx="6.5" cy="2.8" r="2" fill="#2bb58a"/><circle cx="2.8" cy="3.5" r="1.6" fill="#2bb58a"/><rect x="1" y="5" width="6.5" height="3.8" fill="#2bb58a"/><path d="M7.5 6 L9.5 5 V8.8 L7.5 7.8 Z" fill="#2bb58a"/></svg><svg style="left:917.4px;top:88.5px" width="10" height="10" viewBox="0 0 10 10"><path d="M1.2 1.5 L8.8 1.5 L5 8.5 Z M1.2 1.5 L5 5 L8.8 1.5 M5 5 V8.5" fill="none" stroke="#2bb58a" stroke-width="0.8"/><circle cx="1.2" cy="1.5" r="1" fill="#2bb58a"/><circle cx="8.8" cy="1.5" r="1" fill="#2bb58a"/><circle cx="5" cy="8.5" r="1" fill="#2bb58a"/></svg><svg style="left:914.5px;top:101.5px" width="10" height="10" viewBox="0 0 10 10"><circle cx="4.5" cy="5.5" r="3.5" fill="none" stroke="#6a8fd0" stroke-width="1"/><circle cx="4.5" cy="5.5" r="1.5" fill="#6a8fd0"/><path d="M6 2 L9 1" stroke="#6a8fd0" stroke-width="1"/></svg><svg style="left:927px;top:101.3px" width="10" height="10" viewBox="0 0 10 10"><circle cx="5" cy="4.5" r="4" fill="none" stroke="#2bb58a" stroke-width="0.9"/><circle cx="5" cy="4" r="1.3" fill="#2bb58a"/><path d="M5 5 V10" stroke="#2bb58a" stroke-width="0.9"/></svg><svg style="left:913.3px;top:127.5px" width="10" height="10" viewBox="0 0 10 10"><path d="M1.2 8.8 L5.5 4.5 M5 5 C4 3 5.5 0.5 8 1 L6.3 2.8 L7.3 3.8 L9 2 C9.5 4.5 7 6 5 5" fill="none" stroke="#6a8fd0" stroke-width="0.9"/></svg><svg style="left:925.4px;top:127.5px" width="10" height="10" viewBox="0 0 10 10"><path d="M1.2 1.5 L8.8 1.5 L5 8.5 Z M1.2 1.5 L5 5 L8.8 1.5 M5 5 V8.5" fill="none" stroke="#2bb58a" stroke-width="0.8"/><circle cx="1.2" cy="1.5" r="1" fill="#2bb58a"/><circle cx="8.8" cy="1.5" r="1" fill="#2bb58a"/><circle cx="5" cy="8.5" r="1" fill="#2bb58a"/></svg><svg style="left:936.2px;top:140.5px" width="10" height="10" viewBox="0 0 10 10"><path d="M1.2 8.8 L5.5 4.5 M5 5 C4 3 5.5 0.5 8 1 L6.3 2.8 L7.3 3.8 L9 2 C9.5 4.5 7 6 5 5" fill="none" stroke="#6a8fd0" stroke-width="0.9"/></svg><svg style="left:949.6px;top:140.5px" width="10" height="10" viewBox="0 0 10 10"><path d="M1.2 1.5 L8.8 1.5 L5 8.5 Z M1.2 1.5 L5 5 L8.8 1.5 M5 5 V8.5" fill="none" stroke="#2bb58a" stroke-width="0.8"/><circle cx="1.2" cy="1.5" r="1" fill="#2bb58a"/><circle cx="8.8" cy="1.5" r="1" fill="#2bb58a"/><circle cx="5" cy="8.5" r="1" fill="#2bb58a"/></svg><svg style="left:930.8px;top:153.5px" width="10" height="10" viewBox="0 0 10 10"><path d="M1.2 8.8 L5.5 4.5 M5 5 C4 3 5.5 0.5 8 1 L6.3 2.8 L7.3 3.8 L9 2 C9.5 4.5 7 6 5 5" fill="none" stroke="#6a8fd0" stroke-width="0.9"/></svg><svg style="left:942.9px;top:153.5px" width="10" height="10" viewBox="0 0 10 10"><path d="M1.2 1.5 L8.8 1.5 L5 8.5 Z M1.2 1.5 L5 5 L8.8 1.5 M5 5 V8.5" fill="none" stroke="#2bb58a" stroke-width="0.8"/><circle cx="1.2" cy="1.5" r="1" fill="#2bb58a"/><circle cx="8.8" cy="1.5" r="1" fill="#2bb58a"/><circle cx="5" cy="8.5" r="1" fill="#2bb58a"/></svg>
<!-- properties -->
<div class="a" style="left:828px;top:176.3px;width:171px;height:330.5px;background:#2d2d2d;border-radius:3px"></div>

<!-- PROPERTIES -->
<div class="a" style="left:828px;top:176.3px;width:171px;height:16.3px;background:#383838;border-radius:3px 3px 0 0"></div>
<div class="btn" style="left:833px;top:178.4px;width:20px;height:11.1px;background:#282828"></div>
<svg style="left:835px;top:179.3px" width="16" height="10" viewBox="0 0 16 10"><rect x="0.5" y="0.6" width="8.5" height="3.8" rx="1.9" fill="#ddd"/><rect x="0.5" y="5.6" width="8.5" height="3.8" rx="1.9" fill="#ddd"/><circle cx="7" cy="2.5" r="1.2" fill="#333"/><circle cx="7" cy="7.5" r="1.2" fill="#333"/><path d="M11 3.5 L12.5 5 L14 3.5" stroke="#c0c0c0" stroke-width="0.9" fill="none"/></svg>
<svg style="left:861.7px;top:179.3px" width="11" height="11" viewBox="0 0 11 11"><rect x="2.8" y="2.8" width="5.4" height="5.4" fill="#e0e0e0"/><path d="M0.8 3 V0.8 H3 M8 0.8 H10.2 V3 M10.2 8 V10.2 H8 M3 10.2 H0.8 V8" stroke="#aaa" stroke-width="0.8" fill="none"/></svg>
<div class="t" style="left:877.3px;top:178.3px;color:#e0e0e0">Icosphere</div>
<svg style="left:920.5px;top:182.5px" width="4" height="5" viewBox="0 0 4 5"><path d="M0.5 0.5 L3 2.5 L0.5 4.5" stroke="#3a3a3a" stroke-width="0.7" fill="none"/></svg>
<svg style="left:931.3px;top:179.8px" width="10" height="10" viewBox="0 0 10 10"><rect x="0" y="0" width="10" height="10" fill="#f0f0f0"/><rect x="0" y="2" width="2" height="2" fill="#222"/><rect x="0" y="6" width="2" height="2" fill="#222"/><rect x="2" y="0" width="2" height="2" fill="#222"/><rect x="2" y="4" width="2" height="2" fill="#222"/><rect x="2" y="8" width="2" height="2" fill="#222"/><rect x="4" y="2" width="2" height="2" fill="#222"/><rect x="4" y="6" width="2" height="2" fill="#222"/><rect x="6" y="0" width="2" height="2" fill="#222"/><rect x="6" y="4" width="2" height="2" fill="#222"/><rect x="6" y="8" width="2" height="2" fill="#222"/><rect x="8" y="2" width="2" height="2" fill="#222"/><rect x="8" y="6" width="2" height="2" fill="#222"/></svg>
<div class="t" style="left:946.4px;top:178.3px;color:#e0e0e0">Conciousness</div>
<!-- tab column -->
<div class="a" style="left:828px;top:192.6px;width:18.2px;height:314.2px;background:#1f1f1f;border-radius:0 0 0 3px"></div>
<div class="a" style="left:829px;top:197.7px;width:16.4px;height:17.4px;background:#282828;border-radius:3px 0 0 3px"></div>
<div class="a" style="left:829px;top:221.3px;width:16.4px;height:17.4px;background:#282828;border-radius:3px 0 0 3px"></div>
<div class="a" style="left:829px;top:239.5px;width:16.4px;height:17.4px;background:#282828;border-radius:3px 0 0 3px"></div>
<div class="a" style="left:829px;top:257.9px;width:16.4px;height:17.4px;background:#282828;border-radius:3px 0 0 3px"></div>
<div class="a" style="left:829px;top:276.3px;width:16.4px;height:17.4px;background:#282828;border-radius:3px 0 0 3px"></div>
<div class="a" style="left:829px;top:294.7px;width:16.4px;height:17.4px;background:#282828;border-radius:3px 0 0 3px"></div>
<div class="a" style="left:829px;top:318.4px;width:16.4px;height:17.4px;background:#282828;border-radius:3px 0 0 3px"></div>
<div class="a" style="left:829px;top:336.6px;width:16.4px;height:17.4px;background:#282828;border-radius:3px 0 0 3px"></div>
<div class="a" style="left:829px;top:354.8px;width:16.4px;height:17.4px;background:#282828;border-radius:3px 0 0 3px"></div>
<div class="a" style="left:829px;top:373.0px;width:16.4px;height:17.4px;background:#282828;border-radius:3px 0 0 3px"></div>
<div class="a" style="left:829px;top:391.2px;width:16.4px;height:17.4px;background:#282828;border-radius:3px 0 0 3px"></div>
<div class="a" style="left:829px;top:409.4px;width:16.4px;height:17.4px;background:#282828;border-radius:3px 0 0 3px"></div>
<div class="a" style="left:829px;top:427.6px;width:16.4px;height:17.4px;background:#282828;border-radius:3px 0 0 3px"></div>
<div class="a" style="left:829px;top:451.3px;width:17.2px;height:17.4px;background:#3d3d3d;border-radius:3px 0 0 3px"></div>
<svg style="left:831.5px;top:200.9px" width="11" height="11" viewBox="0 0 11 11"><path d="M2.5 0.5 V4 M2.5 5.5 V10" stroke="#ddd" stroke-width="1" /><rect x="1.2" y="6" width="2.6" height="4" rx="1" fill="#ddd"/><path d="M6 1 V3 C6 4.5 7 5 7.8 5 C8.6 5 9.6 4.5 9.6 3 V1 M7.8 5 V10" stroke="#ddd" stroke-width="1.1" fill="none"/></svg>
<svg style="left:831.5px;top:224.5px" width="11" height="11" viewBox="0 0 11 11"><rect x="1" y="3.5" width="8.5" height="6.5" rx="1" fill="none" stroke="#ddd" stroke-width="1"/><path d="M3 3.5 L5 1.2 L7.5 3.5" stroke="#ddd" stroke-width="0.8" fill="none"/><rect x="7" y="5" width="1.8" height="1.5" fill="#ddd"/><rect x="7" y="7.5" width="1.8" height="1.5" fill="#ddd"/></svg>
<svg style="left:831.5px;top:242.7px" width="11" height="11" viewBox="0 0 11 11"><rect x="1" y="1" width="9" height="3" fill="#ddd"/><rect x="2" y="4" width="7" height="6" fill="none" stroke="#ddd" stroke-width="1"/><rect x="4" y="6" width="3" height="2.5" fill="#ddd"/></svg>
<svg style="left:831.5px;top:261.1px" width="11" height="11" viewBox="0 0 11 11"><rect x="1" y="4" width="6.5" height="6" fill="#888"/><rect x="3.5" y="1" width="6.5" height="6.5" fill="#bbb"/><rect x="3.5" y="1" width="6.5" height="6.5" fill="none" stroke="#eee" stroke-width="0.8"/><path d="M4.5 6.5 L7 3 L9.5 6.5 Z" fill="#eee"/></svg>
<svg style="left:831.5px;top:279.5px" width="11" height="11" viewBox="0 0 11 11"><path d="M3 2 L0.8 8 C0.8 10 5 10 5 8 Z" fill="#ddd"/><circle cx="7" cy="7.5" r="2.4" fill="none" stroke="#ddd" stroke-width="0.9"/><circle cx="8" cy="2" r="1.3" fill="#ddd"/></svg>
<svg style="left:831.5px;top:297.9px" width="11" height="11" viewBox="0 0 11 11"><circle cx="5.5" cy="5.5" r="4.6" fill="none" stroke="#e06070" stroke-width="1.1"/><path d="M3 2 C4 4 6 3 6.5 5 C7 7 4.5 7 5 10 M7.5 1.5 C7 3 9 3.5 10 4" stroke="#e06070" stroke-width="1.2" fill="none"/></svg>
<svg style="left:831.5px;top:321.6px" width="11" height="11" viewBox="0 0 11 11"><rect x="3" y="3" width="5" height="5" fill="#e8954a"/><path d="M1 3 V1 H3 M8 1 H10 V3 M10 8 V10 H8 M3 10 H1 V8" stroke="#c07a3a" stroke-width="0.9" fill="none"/></svg>
<svg style="left:831.5px;top:339.8px" width="11" height="11" viewBox="0 0 11 11"><path d="M1.2 9.8 L5.5 5.5 M5 6 C4 3.5 5.5 0.8 8.5 1.2 L6.6 3.2 L7.8 4.4 L9.8 2.5 C10.2 5.5 7.5 7 5 6" fill="none" stroke="#6aa0e8" stroke-width="1.1"/></svg>
<svg style="left:831.5px;top:358.0px" width="11" height="11" viewBox="0 0 11 11"><circle cx="2" cy="2" r="1.3" fill="#6aa0e8"/><circle cx="9" cy="9" r="1.3" fill="#6aa0e8"/><circle cx="2" cy="9" r="1.1" fill="#6aa0e8"/><path d="M2 2 L9 9 M2 2 V8" stroke="#6aa0e8" stroke-width="0.9"/></svg>
<svg style="left:831.5px;top:376.2px" width="11" height="11" viewBox="0 0 11 11"><circle cx="5.5" cy="5.5" r="4.5" fill="none" stroke="#6aa0e8" stroke-width="1"/><circle cx="5" cy="6" r="1.8" fill="#6aa0e8"/></svg>
<svg style="left:831.5px;top:394.4px" width="11" height="11" viewBox="0 0 11 11"><circle cx="4" cy="7" r="3" fill="none" stroke="#6aa0e8" stroke-width="1"/><circle cx="7" cy="4" r="3" fill="none" stroke="#6aa0e8" stroke-width="1"/><circle cx="4" cy="7" r="1" fill="#6aa0e8"/></svg>
<svg style="left:831.5px;top:412.6px" width="11" height="11" viewBox="0 0 11 11"><path d="M1.5 2 L9.5 2 L5.5 9.5 Z M1.5 2 L5.5 5.5 L9.5 2 M5.5 5.5 V9.5" fill="none" stroke="#2bb58a" stroke-width="1"/><circle cx="1.5" cy="2" r="1.1" fill="#2bb58a"/><circle cx="9.5" cy="2" r="1.1" fill="#2bb58a"/><circle cx="5.5" cy="9.5" r="1.1" fill="#2bb58a"/></svg>
<svg style="left:831.5px;top:430.8px" width="11" height="11" viewBox="0 0 11 11"><circle cx="5.5" cy="5.5" r="4.6" fill="#e06070"/><path d="M5.5 5.5 V0.9 A4.6 4.6 0 0 1 10.1 5.5 Z" fill="#f5b0b8"/><path d="M5.5 5.5 L1.5 8 A4.6 4.6 0 0 0 5.5 10.1 Z" fill="#333"/></svg>
<svg style="left:831.5px;top:454.5px" width="11" height="11" viewBox="0 0 11 11"><rect x="0.5" y="0.5" width="10" height="10" fill="#e06070"/><rect x="0.5" y="2.5" width="2" height="2" fill="#3a2a2c"/><rect x="0.5" y="6.5" width="2" height="2" fill="#3a2a2c"/><rect x="2.5" y="0.5" width="2" height="2" fill="#3a2a2c"/><rect x="2.5" y="4.5" width="2" height="2" fill="#3a2a2c"/><rect x="2.5" y="8.5" width="2" height="2" fill="#3a2a2c"/><rect x="4.5" y="2.5" width="2" height="2" fill="#3a2a2c"/><rect x="4.5" y="6.5" width="2" height="2" fill="#3a2a2c"/><rect x="6.5" y="0.5" width="2" height="2" fill="#3a2a2c"/><rect x="6.5" y="4.5" width="2" height="2" fill="#3a2a2c"/><rect x="6.5" y="8.5" width="2" height="2" fill="#3a2a2c"/><rect x="8.5" y="2.5" width="2" height="2" fill="#3a2a2c"/><rect x="8.5" y="6.5" width="2" height="2" fill="#3a2a2c"/></svg>
<div class="a" style="left:846.3px;top:192.6px;width:148.9px;height:129px;background:#353535"></div><div class="a" style="left:846.3px;top:192.6px;width:148.9px;height:14.7px;background:#3d3d3d"></div><svg style="left:852px;top:197.8px" width="5" height="5" viewBox="0 0 5 5"><path d="M0.3 0.5 H4.7 L2.5 4.3 Z" fill="#cfcfcf"/></svg><div class="t" style="left:860.5px;top:194.0px;color:#dcdcdc">Preview</div><svg style="left:986px;top:198.6px" width="8" height="3" viewBox="0 0 8 3"><path d="M0 1 H8 M0 2.5 H8" stroke="#555" stroke-width="0.5" stroke-dasharray="1 0.6"/></svg><svg style="left:851.5px;top:213.7px" width="143" height="98" viewBox="0 0 143 98">
<defs><filter id="cl" x="0" y="0" width="100%" height="100%" color-interpolation-filters="sRGB"><feTurbulence type="fractalNoise" baseFrequency="0.07" numOctaves="2" seed="11"/><feColorMatrix type="matrix" values="0.55 0 0 0 0.50  0.55 0 0 0 0.50  0.55 0 0 0 0.50  0 0 0 0 1"/><feGaussianBlur stdDeviation="2.2"/></filter>
<clipPath id="pc"><rect x="0" y="0" width="143" height="98" rx="2.5"/></clipPath></defs>
<g clip-path="url(#pc)"><rect x="-5" y="-5" width="153" height="108" fill="#bbb" filter="url(#cl)"/></g>
</svg>
<svg style="left:919px;top:314px" width="9" height="4" viewBox="0 0 9 4"><path d="M0 1 H9 M0 3 H9" stroke="#666" stroke-width="0.6" stroke-dasharray="1.2 0.6"/></svg>
<div class="a" style="left:846.3px;top:323px;width:148.9px;height:125px;background:#353535"></div><div class="a" style="left:846.3px;top:323px;width:148.9px;height:14.7px;background:#3d3d3d"></div><svg style="left:852px;top:328.2px" width="5" height="5" viewBox="0 0 5 5"><path d="M0.3 0.5 H4.7 L2.5 4.3 Z" fill="#cfcfcf"/></svg><div class="t" style="left:860.5px;top:324.4px;color:#dcdcdc">Clouds</div><svg style="left:986px;top:329.0px" width="8" height="3" viewBox="0 0 8 3"><path d="M0 1 H8 M0 2.5 H8" stroke="#555" stroke-width="0.5" stroke-dasharray="1 0.6"/></svg><div class="t tr" style="left:831.3px;width:80px;text-align:right;top:343.8px;color:#dcdcdc">Noise Basis</div><div class="btn" style="left:917.2px;top:344.3px;width:63.8px;height:11.0px;background:#282828;border-radius:2.5px"></div><div class="t" style="left:921.5px;top:343.8px;color:#dcdcdc">Improved Perl...</div><svg style="left:974.5px;top:348.0px" width="6" height="4" viewBox="0 0 6 4"><path d="M0.8 0.8 L3 3 L5.2 0.8" stroke="#c0c0c0" stroke-width="0.9" fill="none"/></svg><svg style="left:986.9px;top:348.3px" width="3" height="3" viewBox="0 0 3 3"><circle cx="1.5" cy="1.5" r="1.35" fill="#d8d8d8"/></svg><div class="t tr" style="left:831.3px;width:80px;text-align:right;top:363.4px;color:#dcdcdc">Type</div><div class="btn" style="left:917.2px;top:363.8px;width:63.8px;height:11.2px;background:#282828;border-radius:2.5px"></div><div class="t" style="left:921.5px;top:363.4px;color:#dcdcdc">Soft</div><svg style="left:974.5px;top:367.59999999999997px" width="6" height="4" viewBox="0 0 6 4"><path d="M0.8 0.8 L3 3 L5.2 0.8" stroke="#c0c0c0" stroke-width="0.9" fill="none"/></svg><svg style="left:986.9px;top:367.9px" width="3" height="3" viewBox="0 0 3 3"><circle cx="1.5" cy="1.5" r="1.35" fill="#d8d8d8"/></svg><div class="t tr" style="left:831.3px;width:80px;text-align:right;top:383.0px;color:#dcdcdc">Color</div><div class="btn" style="left:917.2px;top:383.4px;width:63.8px;height:11.2px;background:#282828;border-radius:2.5px"></div><div class="t" style="left:921.5px;top:383.0px;color:#dcdcdc">Grayscale</div><svg style="left:974.5px;top:387.2px" width="6" height="4" viewBox="0 0 6 4"><path d="M0.8 0.8 L3 3 L5.2 0.8" stroke="#c0c0c0" stroke-width="0.9" fill="none"/></svg><svg style="left:986.9px;top:387.5px" width="3" height="3" viewBox="0 0 3 3"><circle cx="1.5" cy="1.5" r="1.35" fill="#d8d8d8"/></svg><div class="t tr" style="left:831.3px;width:80px;text-align:right;top:402.2px;color:#dcdcdc">Size</div><div class="btn" style="left:917.2px;top:402.4px;width:63.8px;height:11.6px;background:#897a2c;border-radius:2.5px"></div><div class="t tc" style="left:917.2px;width:63.8px;text-align:center;top:402.2px;color:#e8e8e8">0.34</div><svg style="left:983.8px;top:404.5px" width="7" height="7" viewBox="0 0 7 7"><path d="M3.5 0.2 L6.8 3.5 L3.5 6.8 L0.2 3.5 Z" fill="#e8e8e8"/></svg><div class="t tr" style="left:831.3px;width:80px;text-align:right;top:416.8px;color:#dcdcdc">Depth</div><div class="btn" style="left:917.2px;top:417.2px;width:63.8px;height:11.2px;background:#545454;border-radius:2.5px"></div><div class="t tc" style="left:917.2px;width:63.8px;text-align:center;top:416.8px;color:#e0e0e0">1</div><svg style="left:986.9px;top:421.3px" width="3" height="3" viewBox="0 0 3 3"><circle cx="1.5" cy="1.5" r="1.35" fill="#d8d8d8"/></svg><div class="t tr" style="left:831.3px;width:80px;text-align:right;top:430.9px;color:#dcdcdc">Nabla</div><div class="btn" style="left:917.2px;top:431.3px;width:63.8px;height:11.2px;background:#545454;border-radius:2.5px"></div><div class="t tc" style="left:917.2px;width:63.8px;text-align:center;top:430.9px;color:#e0e0e0">0.10</div><svg style="left:986.9px;top:435.4px" width="3" height="3" viewBox="0 0 3 3"><circle cx="1.5" cy="1.5" r="1.35" fill="#d8d8d8"/></svg><div class="a" style="left:846.3px;top:448.9px;width:148.9px;height:58px;background:#353535"></div><div class="a" style="left:846.3px;top:448.9px;width:148.9px;height:14.7px;background:#3d3d3d"></div><svg style="left:852px;top:454.1px" width="5" height="5" viewBox="0 0 5 5"><path d="M0.3 0.5 H4.7 L2.5 4.3 Z" fill="#cfcfcf"/></svg><div class="t" style="left:860px;top:450.3px;color:#dcdcdc">Colors</div><svg style="left:986px;top:454.9px" width="8" height="3" viewBox="0 0 8 3"><path d="M0 1 H8 M0 2.5 H8" stroke="#555" stroke-width="0.5" stroke-dasharray="1 0.6"/></svg><div class="t tr" style="left:885.4px;width:80px;text-align:right;top:470.0px;color:#dcdcdc">Clamp</div><div class="a" style="left:971.2px;top:472px;width:8.4px;height:8px;background:#4772b3;border-radius:1.5px"></div><svg style="left:971.2px;top:472px" width="9" height="8" viewBox="0 0 9 8"><path d="M2 4 L3.8 5.8 L7 2" stroke="#eee" stroke-width="1" fill="none"/></svg><svg style="left:986.7px;top:474.5px" width="3" height="3" viewBox="0 0 3 3"><circle cx="1.5" cy="1.5" r="1.35" fill="#d8d8d8"/></svg><div class="t tr" style="left:831.3px;width:80px;text-align:right;top:484.3px;color:#dcdcdc">Multiply R</div><div class="btn" style="left:917.2px;top:484.4px;width:63.8px;height:11.8px;background:#545454;border-radius:2.5px 2.5px 0 0"></div><div class="t tc" style="left:917.2px;width:63.8px;text-align:center;top:484.3px;color:#e0e0e0">1.000</div><svg style="left:986.7px;top:488.8px" width="3" height="3" viewBox="0 0 3 3"><circle cx="1.5" cy="1.5" r="1.35" fill="#d8d8d8"/></svg><div class="a" style="left:917.2px;top:496.2px;width:63.8px;height:0.6px;background:#444"></div><div class="t tr" style="left:831.3px;width:80px;text-align:right;top:495.6px;color:#dcdcdc">G</div><div class="btn" style="left:917.2px;top:496.8px;width:63.8px;height:11px;background:#545454;border-radius:0"></div><div class="t tc" style="left:917.2px;width:63.8px;text-align:center;top:496.0px;color:#e0e0e0">1.000</div><svg style="left:986.7px;top:500.1px" width="3" height="3" viewBox="0 0 3 3"><circle cx="1.5" cy="1.5" r="1.35" fill="#d8d8d8"/></svg>
<!-- status bar -->
<div class="a" style="left:0;top:506.8px;width:1000px;height:14.2px;background:#303030"></div>

<svg style="left:7.5px;top:510px" width="12" height="10" viewBox="0 0 12 10"><rect x="0.5" y="0.5" width="6.5" height="9" rx="3" fill="none" stroke="#cfcfcf" stroke-width="0.9"/><path d="M1 4 V3.5 A3 3 0 0 1 3.75 0.8 V4 Z" fill="#cfcfcf"/></svg><div class="t" style="left:22.3px;top:508.5px;color:#c8c8c8">Select</div><svg style="left:50px;top:510px" width="12" height="10" viewBox="0 0 12 10"><rect x="0.5" y="0.5" width="6.5" height="9" rx="3" fill="none" stroke="#cfcfcf" stroke-width="0.9"/><path d="M1 4 V3.5 A3 3 0 0 1 3.75 0.8 V4 Z" fill="#cfcfcf"/><path d="M8.5 1 C9.5 2 9.5 4 8.5 5 M10.5 0.5 C11.5 2 11.5 4 10.5 5.5" stroke="#cfcfcf" stroke-width="0.7" fill="none"/></svg><div class="t" style="left:66px;top:508.5px;color:#c8c8c8">Box Select</div><svg style="left:170.3px;top:510px" width="12" height="10" viewBox="0 0 12 10"><rect x="0.5" y="0.5" width="6.5" height="9" rx="3" fill="none" stroke="#cfcfcf" stroke-width="0.9"/><rect x="3" y="2" width="1.5" height="3" fill="#cfcfcf"/></svg><div class="t" style="left:184.8px;top:508.5px;color:#c8c8c8">Rotate View</div><svg style="left:332.5px;top:510px" width="12" height="10" viewBox="0 0 12 10"><rect x="0.5" y="0.5" width="6.5" height="9" rx="3" fill="none" stroke="#cfcfcf" stroke-width="0.9"/><path d="M6.5 4 V3.5 A3 3 0 0 0 3.75 0.8 V4 Z" fill="#cfcfcf"/></svg><div class="t" style="left:346.5px;top:508.5px;color:#c8c8c8">Object Context Menu</div><div class="t tr" style="left:581px;width:400px;text-align:right;top:508.5px;color:#c8c8c8">AI | Icosphere | Verts:327,684 | Faces:491,520 | Tris:983,040 | Objects:0/3 | Mem: 386.6 MiB | v2.82.7</div>
</body></html>
